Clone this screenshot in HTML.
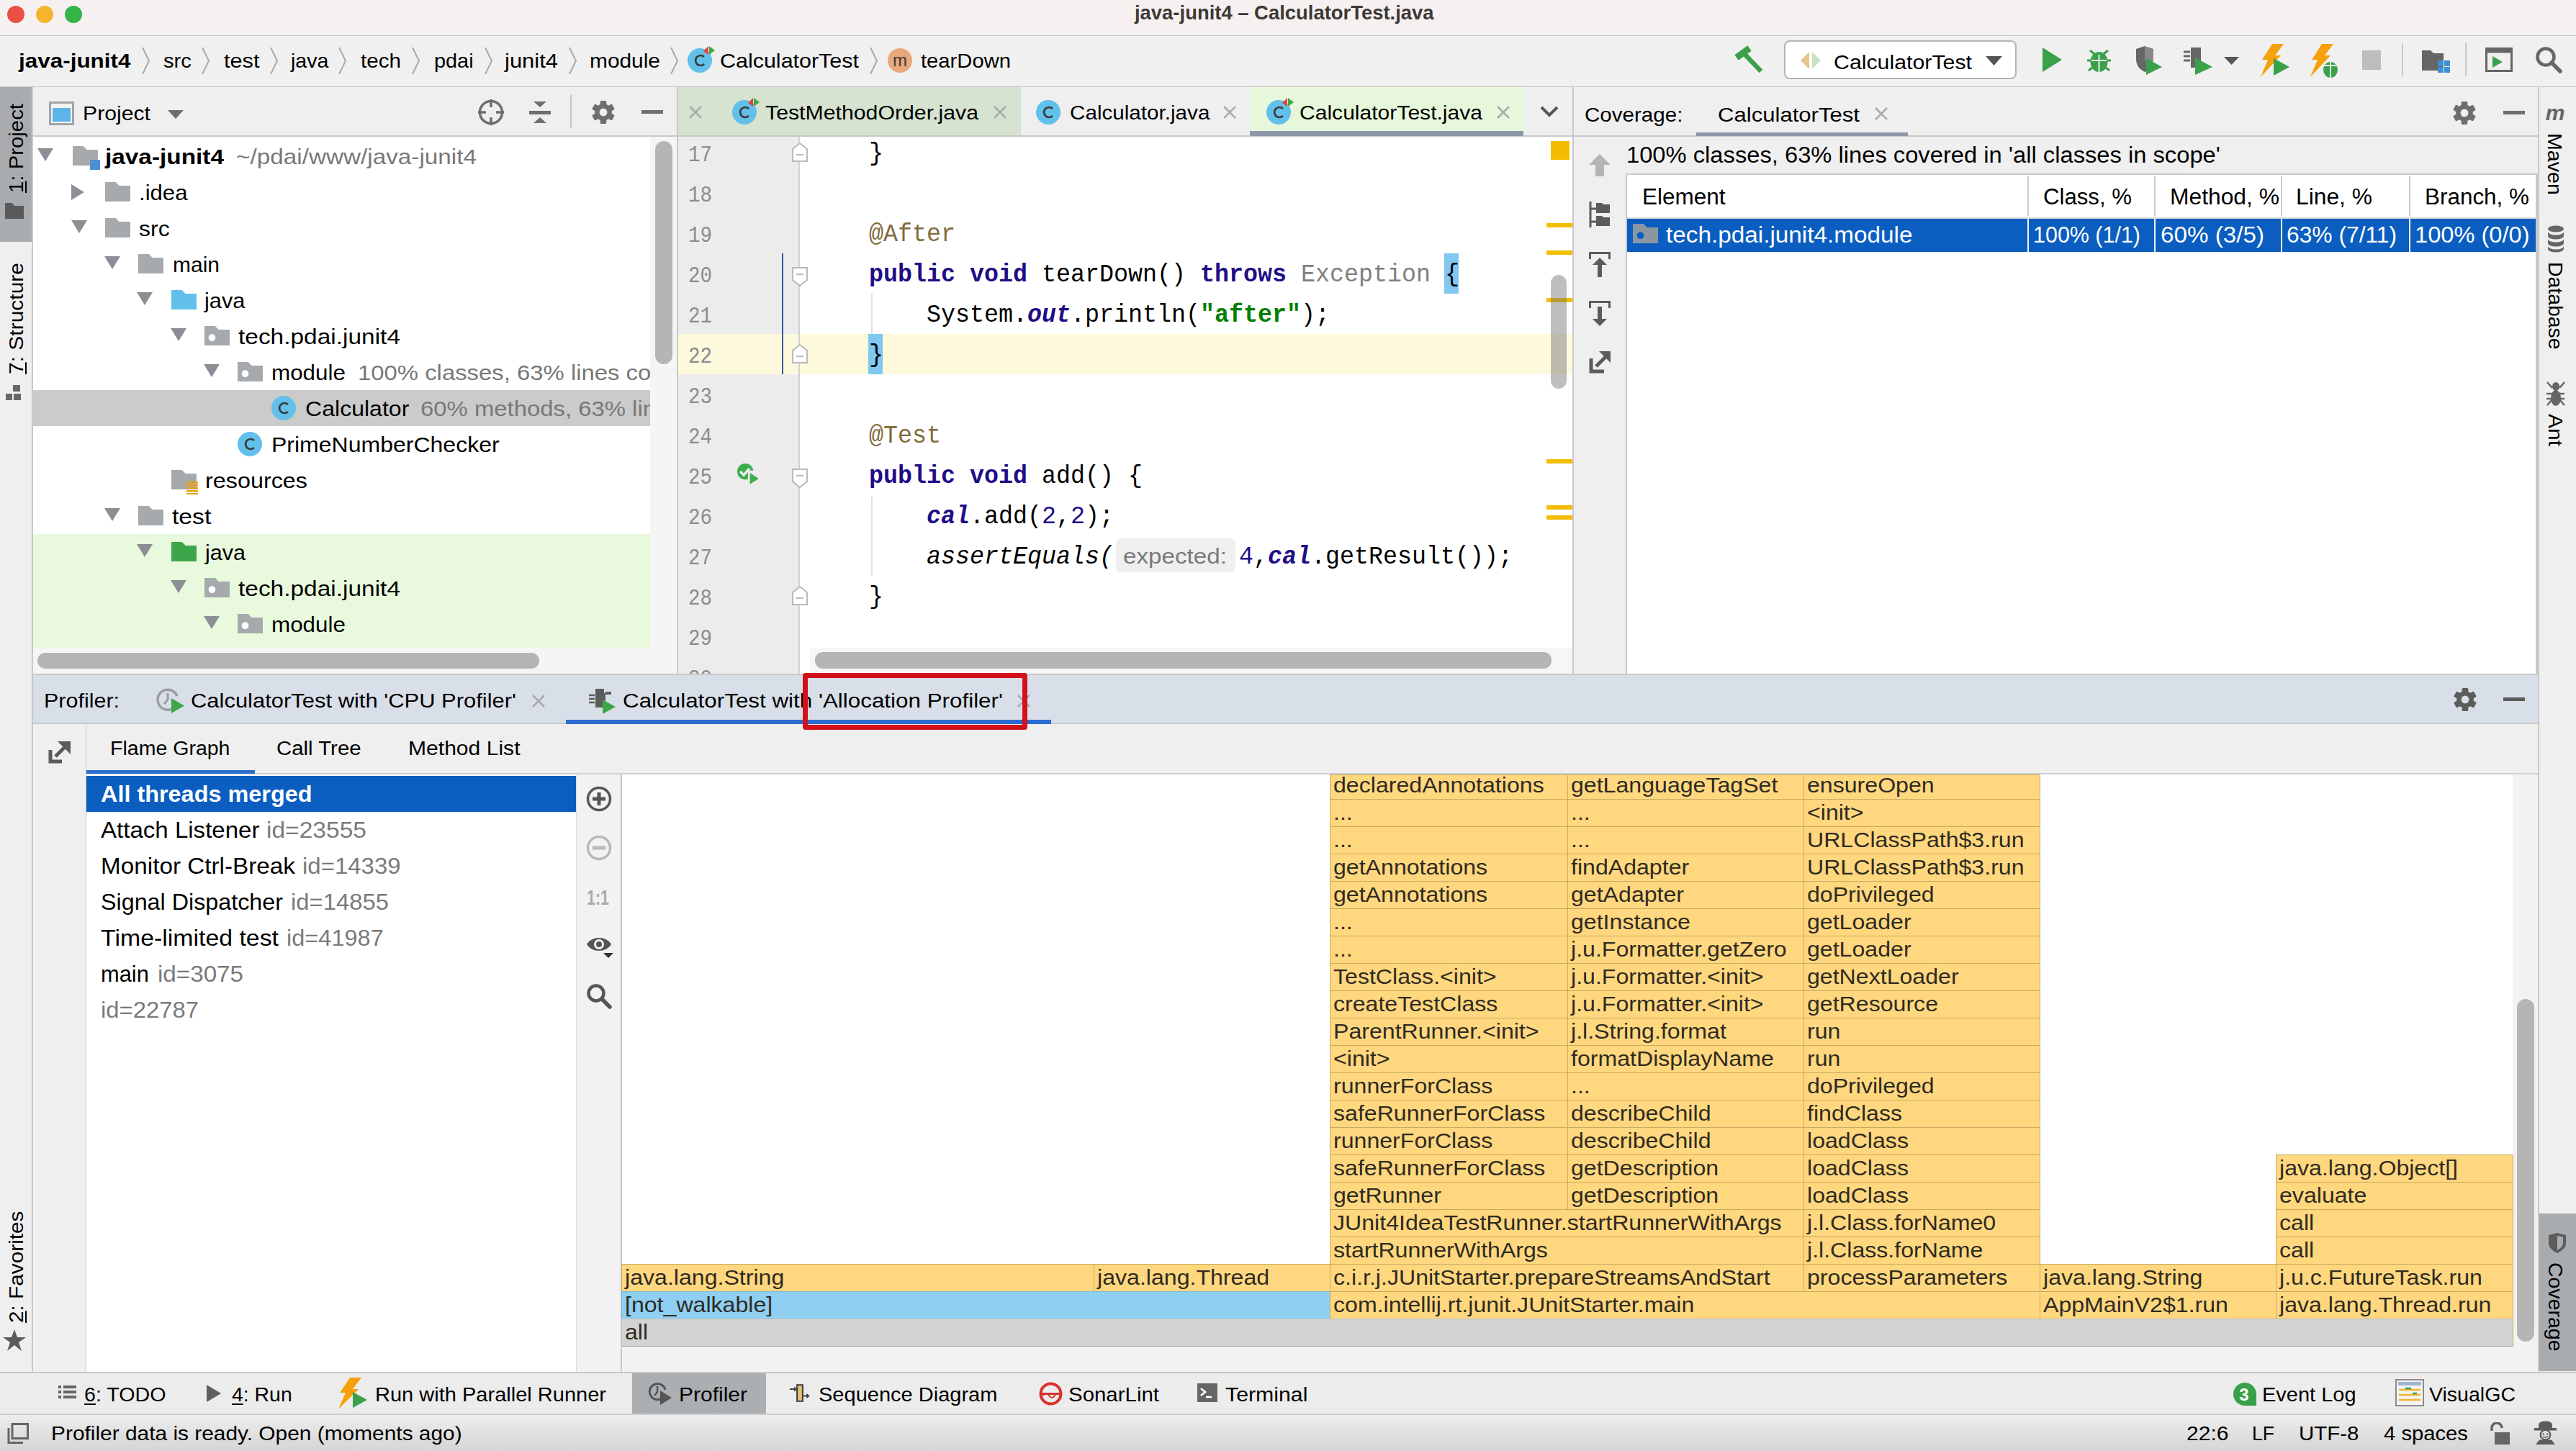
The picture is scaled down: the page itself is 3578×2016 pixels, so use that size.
<!DOCTYPE html>
<html><head><meta charset="utf-8"><style>
html,body{margin:0;padding:0;}
body{width:3578px;height:2016px;overflow:hidden;position:relative;background:#efefef;}
#r{position:absolute;left:0;top:0;width:3578px;height:2016px;overflow:hidden;}
#r>*{position:absolute;}
.t{white-space:pre;transform-origin:0 0;}
u{text-decoration:underline;text-decoration-thickness:2px;text-underline-offset:3px;}
</style></head><body><div id="r">
<div style="left:0px;top:0px;width:3578px;height:49px;background:#f6f0f0;"></div>
<div style="left:0px;top:49px;width:3578px;height:1px;background:#c4c4c4;"></div>
<svg style="left:10px;top:8px;" width="24" height="24" viewBox="0 0 24 24"><circle cx="12" cy="12" r="12" fill="#ea5045"/></svg>
<svg style="left:50px;top:8px;" width="24" height="24" viewBox="0 0 24 24"><circle cx="12" cy="12" r="12" fill="#f4b42c"/></svg>
<svg style="left:90px;top:8px;" width="24" height="24" viewBox="0 0 24 24"><circle cx="12" cy="12" r="12" fill="#33b54a"/></svg>
<div class="t" style="left:1576.0px;top:5.1px;font-family:'Liberation Sans', sans-serif;font-size:27px;line-height:27px;color:#3c3935;font-weight:700;transform:scaleX(1.0157);">java-junit4 – CalculatorTest.java</div>
<div style="left:0px;top:50px;width:3578px;height:70px;background:#f0f0f0;"></div>
<div style="left:0px;top:120px;width:3578px;height:1px;background:#c6c6c6;"></div>
<div class="t" style="left:26.0px;top:70.7px;font-family:'Liberation Sans', sans-serif;font-size:27.5px;line-height:27.5px;color:#000;font-weight:700;transform:scaleX(1.1433);">java-junit4</div>
<svg style="left:197px;top:66px;" width="12" height="37" viewBox="0 0 12 37"><path d="M1 0 L10 18.5 L1 37" fill="none" stroke="#a9a9a9" stroke-width="2"/></svg>
<svg style="left:280px;top:66px;" width="12" height="37" viewBox="0 0 12 37"><path d="M1 0 L10 18.5 L1 37" fill="none" stroke="#a9a9a9" stroke-width="2"/></svg>
<svg style="left:374.5px;top:66px;" width="12" height="37" viewBox="0 0 12 37"><path d="M1 0 L10 18.5 L1 37" fill="none" stroke="#a9a9a9" stroke-width="2"/></svg>
<svg style="left:470px;top:66px;" width="12" height="37" viewBox="0 0 12 37"><path d="M1 0 L10 18.5 L1 37" fill="none" stroke="#a9a9a9" stroke-width="2"/></svg>
<svg style="left:572px;top:66px;" width="12" height="37" viewBox="0 0 12 37"><path d="M1 0 L10 18.5 L1 37" fill="none" stroke="#a9a9a9" stroke-width="2"/></svg>
<svg style="left:672.5px;top:66px;" width="12" height="37" viewBox="0 0 12 37"><path d="M1 0 L10 18.5 L1 37" fill="none" stroke="#a9a9a9" stroke-width="2"/></svg>
<svg style="left:790px;top:66px;" width="12" height="37" viewBox="0 0 12 37"><path d="M1 0 L10 18.5 L1 37" fill="none" stroke="#a9a9a9" stroke-width="2"/></svg>
<svg style="left:931px;top:66px;" width="12" height="37" viewBox="0 0 12 37"><path d="M1 0 L10 18.5 L1 37" fill="none" stroke="#a9a9a9" stroke-width="2"/></svg>
<svg style="left:1208px;top:66px;" width="12" height="37" viewBox="0 0 12 37"><path d="M1 0 L10 18.5 L1 37" fill="none" stroke="#a9a9a9" stroke-width="2"/></svg>
<div class="t" style="left:227.0px;top:70.7px;font-family:'Liberation Sans', sans-serif;font-size:27.5px;line-height:27.5px;color:#000;font-weight:400;transform:scaleX(1.0635);">src</div>
<div class="t" style="left:310.6px;top:70.7px;font-family:'Liberation Sans', sans-serif;font-size:27.5px;line-height:27.5px;color:#000;font-weight:400;transform:scaleX(1.1144);">test</div>
<div class="t" style="left:404.0px;top:70.7px;font-family:'Liberation Sans', sans-serif;font-size:27.5px;line-height:27.5px;color:#000;font-weight:400;transform:scaleX(1.0406);">java</div>
<div class="t" style="left:501.0px;top:70.7px;font-family:'Liberation Sans', sans-serif;font-size:27.5px;line-height:27.5px;color:#000;font-weight:400;transform:scaleX(1.0772);">tech</div>
<div class="t" style="left:603.0px;top:70.7px;font-family:'Liberation Sans', sans-serif;font-size:27.5px;line-height:27.5px;color:#000;font-weight:400;transform:scaleX(1.0500);">pdai</div>
<div class="t" style="left:701.0px;top:70.7px;font-family:'Liberation Sans', sans-serif;font-size:27.5px;line-height:27.5px;color:#000;font-weight:400;transform:scaleX(1.1255);">junit4</div>
<div class="t" style="left:819.0px;top:70.7px;font-family:'Liberation Sans', sans-serif;font-size:27.5px;line-height:27.5px;color:#000;font-weight:400;transform:scaleX(1.0864);">module</div>
<svg style="left:953px;top:59px;" width="60" height="46" viewBox="0 0 60 46"><circle cx="19" cy="25" r="17" fill="#62c0ea"/><path d="M25 20 A7 7 0 1 0 25 30" fill="none" stroke="#3b3b3b" stroke-width="2.7"/><path d="M24 12 L31 5 L31 17 Z" fill="#e3423b"/><path d="M32 5 L40 11 L32 17 Z" fill="#3aaa49"/></svg>
<div class="t" style="left:1000.0px;top:70.7px;font-family:'Liberation Sans', sans-serif;font-size:27.5px;line-height:27.5px;color:#000;font-weight:400;transform:scaleX(1.1076);">CalculatorTest</div>
<svg style="left:1233px;top:67px;" width="34" height="34" viewBox="0 0 34 34"><circle cx="17" cy="17" r="17" fill="#e9a77c"/><text x="17" y="25" font-family="Liberation Sans" font-size="24" text-anchor="middle" fill="#3b3b3b">m</text></svg>
<div class="t" style="left:1279.0px;top:70.7px;font-family:'Liberation Sans', sans-serif;font-size:27.5px;line-height:27.5px;color:#000;font-weight:400;transform:scaleX(1.0620);">tearDown</div>
<svg style="left:2408px;top:62px;" width="42" height="42" viewBox="0 0 42 42"><path d="M4 18 L22 5" stroke="#3aa14a" stroke-width="9"/><path d="M14 12 L38 37" stroke="#3aa14a" stroke-width="6.5"/></svg>
<div style="left:2478px;top:56px;width:323px;height:54px;background:#fff;border:2px solid #b4b4b4;border-radius:8px;box-sizing:border-box;"></div>
<svg style="left:2499px;top:70px;" width="32" height="28" viewBox="0 0 32 28"><path d="M14 2 L2 14 L14 26 Z" fill="#e4c68e"/><path d="M18 2 L30 14 L18 26 Z" fill="#c9e3c2"/></svg>
<div class="t" style="left:2547.0px;top:73.2px;font-family:'Liberation Sans', sans-serif;font-size:27.5px;line-height:27.5px;color:#000;font-weight:400;transform:scaleX(1.1019);">CalculatorTest</div>
<svg style="left:2758px;top:78px;" width="23" height="13" viewBox="0 0 23 13"><path d="M0 0 H23 L11.5 13 Z" fill="#555"/></svg>
<svg style="left:2837px;top:66px;" width="27" height="34" viewBox="0 0 27 34"><path d="M0 0 L27 17 L0 34 Z" fill="#3aa14a"/></svg>
<svg style="left:2899px;top:64px;" width="33" height="38" viewBox="0 0 33 38"><ellipse cx="16.5" cy="22" rx="12" ry="14" fill="#3aa14a"/><path d="M4 6 L10 11 M29 6 L23 11 M0 20 H6 M27 20 H33 M2 34 L7 30 M31 34 L26 30" stroke="#3aa14a" stroke-width="3"/><path d="M6 20 H27 M16.5 12 V36" stroke="#eee" stroke-width="2"/></svg>
<svg style="left:2965px;top:64px;" width="40" height="40" viewBox="0 0 40 40"><path d="M2 4 L14 0 L26 4 V18 C26 28 20 33 14 36 C8 33 2 28 2 18 Z" fill="#666"/><path d="M14 0 L26 4 V18 C26 22 25 25 24 27 L14 20 Z" fill="#eee" opacity="0.25"/><path d="M16 17 L38 29 L16 40 Z" fill="#3aa14a"/></svg>
<svg style="left:3033px;top:64px;" width="42" height="40" viewBox="0 0 42 40"><rect x="10" y="2" width="14" height="28" fill="#666"/><path d="M0 8 H9 M0 14 H9 M0 20 H9" stroke="#666" stroke-width="3"/><path d="M16 16 L40 29 L16 40 Z" fill="#3aa14a"/></svg>
<svg style="left:3089px;top:79px;" width="21" height="11" viewBox="0 0 21 11"><path d="M0 0 H21 L10.5 11 Z" fill="#555"/></svg>
<svg style="left:3134px;top:61px;" width="48" height="46" viewBox="0 0 48 46"><path d="M22 0 H38 L26 16 H34 L6 46 L16 22 H8 Z" fill="#f6a00b"/><path d="M24 20 L46 32 L24 44 Z" fill="#3aa14a"/></svg>
<svg style="left:3203px;top:61px;" width="46" height="48" viewBox="0 0 46 48"><path d="M22 0 H38 L26 16 H34 L6 46 L16 22 H8 Z" fill="#f6a00b"/><ellipse cx="34" cy="36" rx="10" ry="11" fill="#3aa14a"/><path d="M24 30 H44 M34 25 V47" stroke="#eee" stroke-width="2"/></svg>
<div style="left:3281px;top:70px;width:26px;height:27px;background:#bdbdbd;"></div>
<div style="left:3336px;top:60px;width:2px;height:46px;background:#c8c8c8;"></div>
<svg style="left:3364px;top:66px;" width="40" height="36" viewBox="0 0 40 36"><path d="M0 4 H12 L16 8 H30 V32 H0 Z" fill="#666"/><rect x="22" y="18" width="8" height="8" fill="#3d8fd6"/><rect x="31" y="18" width="8" height="8" fill="#3d8fd6"/><rect x="22" y="27" width="8" height="8" fill="#3d8fd6"/><rect x="31" y="27" width="8" height="8" fill="#3d8fd6"/></svg>
<div style="left:3424px;top:60px;width:2px;height:46px;background:#c8c8c8;"></div>
<svg style="left:3452px;top:66px;" width="38" height="34" viewBox="0 0 38 34"><rect x="1.5" y="1.5" width="35" height="31" fill="none" stroke="#666" stroke-width="3"/><rect x="1.5" y="1.5" width="35" height="6" fill="#666"/><path d="M10 12 L24 20 L10 28 Z" fill="#3aa14a"/></svg>
<svg style="left:3521px;top:64px;" width="38" height="38" viewBox="0 0 38 38"><circle cx="15" cy="15" r="11.5" fill="none" stroke="#666" stroke-width="4.5"/><path d="M23 23 L35 35" stroke="#666" stroke-width="5.5" stroke-linecap="round"/></svg>
<div style="left:0px;top:121px;width:44px;height:1786px;background:#efefef;"></div>
<div style="left:44px;top:121px;width:2px;height:1786px;background:#c9c9c9;"></div>
<div style="left:0px;top:121px;width:44px;height:215px;background:#a9acaf;"></div>
<div class="t" style="left:8.7px;top:268.4px;font-family:'Liberation Sans', sans-serif;font-size:27.5px;line-height:27.5px;color:#000;font-weight:400;transform:rotate(-90deg) scaleX(1.0674);"><u>1</u>: Project</div>
<svg style="left:7px;top:282px;" width="26" height="22" viewBox="0 0 26 22"><path d="M0 0 H10 L13 4 H26 V22 H0 Z" fill="#5a5a5a"/></svg>
<div class="t" style="left:8.7px;top:520.0px;font-family:'Liberation Sans', sans-serif;font-size:27.5px;line-height:27.5px;color:#000;font-weight:400;transform:rotate(-90deg) scaleX(1.0903);"><u>7</u>: Structure</div>
<svg style="left:8px;top:535px;" width="26" height="22" viewBox="0 0 26 22"><rect x="10" y="0" width="10" height="9" fill="#666"/><rect x="0" y="12" width="9" height="9" fill="#666"/><rect x="11" y="12" width="10" height="9" fill="#666"/><rect x="14" y="2" width="6" height="6" fill="#666"/></svg>
<div class="t" style="left:8.7px;top:1838.0px;font-family:'Liberation Sans', sans-serif;font-size:27.5px;line-height:27.5px;color:#000;font-weight:400;transform:rotate(-90deg) scaleX(1.0823);"><u>2</u>: Favorites</div>
<svg style="left:4px;top:1847px;" width="32" height="30" viewBox="0 0 32 30"><path d="M16 0 L20 11 L32 11 L22 18 L26 30 L16 22 L6 30 L10 18 L0 11 L12 11 Z" fill="#5c5c5c"/></svg>
<div style="left:3527px;top:121px;width:51px;height:1786px;background:#efefef;"></div>
<div style="left:3525px;top:121px;width:2px;height:1786px;background:#c9c9c9;"></div>
<svg style="left:3536px;top:146px;" width="26" height="24" viewBox="0 0 26 24"><text x="13" y="21" font-family="Liberation Sans" font-weight="700" font-style="italic" font-size="30" text-anchor="middle" fill="#666">m</text></svg>
<div class="t" style="left:3562.3px;top:184.5px;font-family:'Liberation Sans', sans-serif;font-size:27.5px;line-height:27.5px;color:#000;font-weight:400;transform:rotate(90deg) scaleX(1.0418);">Maven</div>
<svg style="left:3538px;top:313px;" width="24" height="38" viewBox="0 0 24 38"><ellipse cx="12" cy="5" rx="11" ry="4.5" fill="#666"/><path d="M1 9 V15 A11 4.5 0 0 0 23 15 V9 A11 4.5 0 0 1 1 9 Z" fill="#666"/><path d="M1 19 V25 A11 4.5 0 0 0 23 25 V19 A11 4.5 0 0 1 1 19 Z" fill="#666"/><path d="M1 29 V33 A11 4.5 0 0 0 23 33 V29 A11 4.5 0 0 1 1 29 Z" fill="#666"/></svg>
<div class="t" style="left:3563.3px;top:364.0px;font-family:'Liberation Sans', sans-serif;font-size:27.5px;line-height:27.5px;color:#000;font-weight:400;transform:rotate(90deg) scaleX(1.0328);">Database</div>
<svg style="left:3537px;top:527px;" width="26" height="40" viewBox="0 0 26 40"><ellipse cx="13" cy="10" rx="5" ry="6" fill="#666"/><ellipse cx="13" cy="26" rx="7" ry="11" fill="#666"/><path d="M1 4 L8 12 M25 4 L18 12 M0 20 H25 M1 36 L8 28 M25 36 L18 28 M0 27 H25" stroke="#666" stroke-width="2.5"/></svg>
<div class="t" style="left:3563.3px;top:575.0px;font-family:'Liberation Sans', sans-serif;font-size:27.5px;line-height:27.5px;color:#000;font-weight:400;transform:rotate(90deg) scaleX(1.0901);">Ant</div>
<div style="left:3527px;top:1686px;width:51px;height:219px;background:#a9acaf;"></div>
<svg style="left:3539px;top:1713px;" width="26" height="28" viewBox="0 0 26 28"><path d="M1 3 L13 0 L25 3 V14 C25 21 19 25 13 28 C7 25 1 21 1 14 Z" fill="#5c5c5c"/><path d="M13 4 L21 6 V14 C21 18 18 21 13 24 Z" fill="#a9acaf"/></svg>
<div class="t" style="left:3563.3px;top:1754.0px;font-family:'Liberation Sans', sans-serif;font-size:27.5px;line-height:27.5px;color:#000;font-weight:400;transform:rotate(90deg) scaleX(1.0356);">Coverage</div>
<div style="left:46px;top:121px;width:894px;height:67px;background:#efefef;"></div>
<div style="left:46px;top:188px;width:894px;height:2px;background:#c9c9c9;"></div>
<div style="left:940px;top:121px;width:2px;height:815px;background:#c9c9c9;"></div>
<svg style="left:68px;top:141px;" width="35" height="33" viewBox="0 0 35 33"><rect x="1.5" y="1.5" width="32" height="30" fill="#f3f3f3" stroke="#a0a4a8" stroke-width="3"/><rect x="5" y="9" width="25" height="19" fill="#5eb4e6"/></svg>
<div class="t" style="left:115.0px;top:144.6px;font-family:'Liberation Sans', sans-serif;font-size:27px;line-height:27px;color:#000;font-weight:400;transform:scaleX(1.1184);">Project</div>
<svg style="left:233px;top:153px;" width="22" height="12" viewBox="0 0 22 12"><path d="M0 0 H22 L11.0 12 Z" fill="#6e6e6e"/></svg>
<svg style="left:664px;top:138px;" width="36" height="36" viewBox="0 0 36 36"><circle cx="18" cy="18" r="15.5" fill="none" stroke="#6e6e6e" stroke-width="3.5"/><path d="M18 0 V11 M18 25 V36 M0 18 H11 M25 18 H36" stroke="#6e6e6e" stroke-width="3.5"/></svg>
<svg style="left:735px;top:140px;" width="30" height="32" viewBox="0 0 30 32"><path d="M6 1 H24 L15 9 Z M6 31 H24 L15 23 Z" fill="#6e6e6e"/><rect x="0" y="14" width="30" height="5" fill="#6e6e6e"/></svg>
<div style="left:792px;top:132px;width:2px;height:46px;background:#c4c4c4;"></div>
<svg style="left:821px;top:139px;" width="34" height="34" viewBox="0 0 34 34"><circle cx="17" cy="17" r="11.84" fill="#6e6e6e"/><rect x="12.70" y="1.00" width="8.6" height="32.00" rx="1.5" fill="#6e6e6e" transform="rotate(0 17 17)"/><rect x="12.70" y="1.00" width="8.6" height="32.00" rx="1.5" fill="#6e6e6e" transform="rotate(60 17 17)"/><rect x="12.70" y="1.00" width="8.6" height="32.00" rx="1.5" fill="#6e6e6e" transform="rotate(120 17 17)"/><circle cx="17" cy="17" r="5.44" fill="#efefef"/></svg>
<div style="left:891px;top:153px;width:30px;height:5px;background:#6e6e6e;"></div>
<div style="left:46px;top:190px;width:857px;height:710px;background:#ffffff;"></div>
<div style="left:903px;top:190px;width:37px;height:746px;background:#f5f5f5;"></div>
<div style="left:910px;top:196px;width:24px;height:310px;background:#b5b5b5;border-radius:12px;"></div>
<div style="left:46px;top:900px;width:857px;height:36px;background:#f5f5f5;"></div>
<div style="left:52px;top:907px;width:697px;height:22px;background:#b5b5b5;border-radius:11px;"></div>
<div style="left:46px;top:542px;width:857px;height:50px;background:#cbcbcb;"></div>
<div style="left:46px;top:742px;width:857px;height:158px;background:#e9f9dd;"></div>
<svg style="left:52px;top:206px;" width="22" height="18" viewBox="0 0 22 18"><path d="M0 0 H22 L11.0 18 Z" fill="#8b8f95"/></svg>
<svg style="left:101px;top:203px;" width="35" height="27" viewBox="0 0 35 27"><path d="M0 0 H14.7 L19.7 5 H35 V27 H0 Z" fill="#a6aaad"/></svg>
<div style="left:125px;top:222px;width:14px;height:14px;background:#4b8fd6;"></div>
<div class="t" style="left:146.0px;top:202.6px;font-family:'Liberation Sans', sans-serif;font-size:30px;line-height:30px;color:#000;font-weight:700;transform:scaleX(1.1120);">java-junit4</div>
<div class="t" style="left:328.0px;top:202.6px;font-family:'Liberation Sans', sans-serif;font-size:30px;line-height:30px;color:#787878;font-weight:400;transform:scaleX(1.1097);">~/pdai/www/java-junit4</div>
<svg style="left:99px;top:256px;" width="18" height="22" viewBox="0 0 18 22"><path d="M0 0 L18 11.0 L0 22 Z" fill="#8b8f95"/></svg>
<svg style="left:146px;top:253px;" width="35" height="27" viewBox="0 0 35 27"><path d="M0 0 H14.7 L19.7 5 H35 V27 H0 Z" fill="#a6aaad"/></svg>
<div class="t" style="left:193.0px;top:252.6px;font-family:'Liberation Sans', sans-serif;font-size:30px;line-height:30px;color:#000;font-weight:400;transform:scaleX(1.0375);">.idea</div>
<svg style="left:99px;top:306px;" width="22" height="18" viewBox="0 0 22 18"><path d="M0 0 H22 L11.0 18 Z" fill="#8b8f95"/></svg>
<svg style="left:146px;top:303px;" width="35" height="27" viewBox="0 0 35 27"><path d="M0 0 H14.7 L19.7 5 H35 V27 H0 Z" fill="#a6aaad"/></svg>
<div class="t" style="left:193.0px;top:302.6px;font-family:'Liberation Sans', sans-serif;font-size:30px;line-height:30px;color:#000;font-weight:400;transform:scaleX(1.0675);">src</div>
<svg style="left:145px;top:356px;" width="22" height="18" viewBox="0 0 22 18"><path d="M0 0 H22 L11.0 18 Z" fill="#8b8f95"/></svg>
<svg style="left:192px;top:353px;" width="35" height="27" viewBox="0 0 35 27"><path d="M0 0 H14.7 L19.7 5 H35 V27 H0 Z" fill="#a6aaad"/></svg>
<div class="t" style="left:240.0px;top:352.6px;font-family:'Liberation Sans', sans-serif;font-size:30px;line-height:30px;color:#000;font-weight:400;">main</div>
<svg style="left:190px;top:406px;" width="22" height="18" viewBox="0 0 22 18"><path d="M0 0 H22 L11.0 18 Z" fill="#8b8f95"/></svg>
<svg style="left:238px;top:403px;" width="35" height="27" viewBox="0 0 35 27"><path d="M0 0 H14.7 L19.7 5 H35 V27 H0 Z" fill="#62c0ea"/></svg>
<div class="t" style="left:284.0px;top:402.6px;font-family:'Liberation Sans', sans-serif;font-size:30px;line-height:30px;color:#000;font-weight:400;transform:scaleX(1.0246);">java</div>
<svg style="left:237px;top:456px;" width="22" height="18" viewBox="0 0 22 18"><path d="M0 0 H22 L11.0 18 Z" fill="#8b8f95"/></svg>
<svg style="left:284px;top:453px;" width="35" height="27" viewBox="0 0 35 27"><path d="M0 0 H14.7 L19.7 5 H35 V27 H0 Z" fill="#a6aaad"/><circle cx="10.5" cy="16.2" r="4.859999999999999" fill="#fff"/></svg>
<div class="t" style="left:331.0px;top:452.6px;font-family:'Liberation Sans', sans-serif;font-size:30px;line-height:30px;color:#000;font-weight:400;transform:scaleX(1.1149);">tech.pdai.junit4</div>
<svg style="left:283px;top:506px;" width="22" height="18" viewBox="0 0 22 18"><path d="M0 0 H22 L11.0 18 Z" fill="#8b8f95"/></svg>
<svg style="left:330px;top:503px;" width="35" height="27" viewBox="0 0 35 27"><path d="M0 0 H14.7 L19.7 5 H35 V27 H0 Z" fill="#a6aaad"/><circle cx="10.5" cy="16.2" r="4.859999999999999" fill="#fff"/></svg>
<div class="t" style="left:377.0px;top:502.6px;font-family:'Liberation Sans', sans-serif;font-size:30px;line-height:30px;color:#000;font-weight:400;transform:scaleX(1.0467);">module</div>
<div style="left:497px;top:492px;width:406px;height:50px;overflow:hidden"></div>
<div class="t" style="left:497.0px;top:502.6px;font-family:'Liberation Sans', sans-serif;font-size:30px;line-height:30px;color:#787878;font-weight:400;transform:scaleX(1.0953);">100% classes, 63% lines covered</div>
<svg style="left:375px;top:542px;" width="60" height="46" viewBox="0 0 60 46"><circle cx="19" cy="25" r="17" fill="#62c0ea"/><path d="M25 20 A7 7 0 1 0 25 30" fill="none" stroke="#3b3b3b" stroke-width="2.7"/></svg>
<div class="t" style="left:423.6px;top:552.6px;font-family:'Liberation Sans', sans-serif;font-size:30px;line-height:30px;color:#000;font-weight:400;transform:scaleX(1.0691);">Calculator</div>
<div class="t" style="left:584.0px;top:552.6px;font-family:'Liberation Sans', sans-serif;font-size:30px;line-height:30px;color:#787878;font-weight:400;transform:scaleX(1.0953);">60% methods, 63% lines covered</div>
<svg style="left:328px;top:592px;" width="60" height="46" viewBox="0 0 60 46"><circle cx="19" cy="25" r="17" fill="#62c0ea"/><path d="M25 20 A7 7 0 1 0 25 30" fill="none" stroke="#3b3b3b" stroke-width="2.7"/></svg>
<div class="t" style="left:377.0px;top:602.6px;font-family:'Liberation Sans', sans-serif;font-size:30px;line-height:30px;color:#000;font-weight:400;transform:scaleX(1.0669);">PrimeNumberChecker</div>
<svg style="left:238px;top:653px;" width="35" height="27" viewBox="0 0 35 27"><path d="M0 0 H14.7 L19.7 5 H35 V27 H0 Z" fill="#a6aaad"/></svg>
<svg style="left:259px;top:669px;" width="16" height="18" viewBox="0 0 16 18"><rect x="0" y="0" width="16" height="2.5" fill="#e8a01b"/><rect x="0" y="4" width="16" height="2.5" fill="#e8a01b"/><rect x="0" y="8" width="16" height="2.5" fill="#e8a01b"/><rect x="0" y="12" width="16" height="2.5" fill="#e8a01b"/><rect x="0" y="16" width="16" height="2.5" fill="#e8a01b"/></svg>
<div class="t" style="left:285.0px;top:652.6px;font-family:'Liberation Sans', sans-serif;font-size:30px;line-height:30px;color:#000;font-weight:400;transform:scaleX(1.0781);">resources</div>
<svg style="left:145px;top:706px;" width="22" height="18" viewBox="0 0 22 18"><path d="M0 0 H22 L11.0 18 Z" fill="#8b8f95"/></svg>
<svg style="left:192px;top:703px;" width="35" height="27" viewBox="0 0 35 27"><path d="M0 0 H14.7 L19.7 5 H35 V27 H0 Z" fill="#a6aaad"/></svg>
<div class="t" style="left:238.7px;top:702.6px;font-family:'Liberation Sans', sans-serif;font-size:30px;line-height:30px;color:#000;font-weight:400;transform:scaleX(1.1228);">test</div>
<svg style="left:190px;top:756px;" width="22" height="18" viewBox="0 0 22 18"><path d="M0 0 H22 L11.0 18 Z" fill="#8b8f95"/></svg>
<svg style="left:238px;top:753px;" width="35" height="27" viewBox="0 0 35 27"><path d="M0 0 H14.7 L19.7 5 H35 V27 H0 Z" fill="#3ea64a"/></svg>
<div class="t" style="left:285.0px;top:752.6px;font-family:'Liberation Sans', sans-serif;font-size:30px;line-height:30px;color:#000;font-weight:400;transform:scaleX(1.0173);">java</div>
<svg style="left:237px;top:806px;" width="22" height="18" viewBox="0 0 22 18"><path d="M0 0 H22 L11.0 18 Z" fill="#8b8f95"/></svg>
<svg style="left:284px;top:803px;" width="35" height="27" viewBox="0 0 35 27"><path d="M0 0 H14.7 L19.7 5 H35 V27 H0 Z" fill="#a6aaad"/><circle cx="10.5" cy="16.2" r="4.859999999999999" fill="#fff"/></svg>
<div class="t" style="left:331.0px;top:802.6px;font-family:'Liberation Sans', sans-serif;font-size:30px;line-height:30px;color:#000;font-weight:400;transform:scaleX(1.1149);">tech.pdai.junit4</div>
<svg style="left:283px;top:856px;" width="22" height="18" viewBox="0 0 22 18"><path d="M0 0 H22 L11.0 18 Z" fill="#8b8f95"/></svg>
<svg style="left:330px;top:853px;" width="35" height="27" viewBox="0 0 35 27"><path d="M0 0 H14.7 L19.7 5 H35 V27 H0 Z" fill="#a6aaad"/><circle cx="10.5" cy="16.2" r="4.859999999999999" fill="#fff"/></svg>
<div class="t" style="left:377.0px;top:852.6px;font-family:'Liberation Sans', sans-serif;font-size:30px;line-height:30px;color:#000;font-weight:400;transform:scaleX(1.0467);">module</div>
<div style="left:903px;top:190px;width:37px;height:710px;background:#f5f5f5;"></div>
<div style="left:910px;top:196px;width:24px;height:310px;background:#b5b5b5;border-radius:12px;"></div>
<div style="left:46px;top:900px;width:857px;height:36px;background:#f5f5f5;"></div>
<div style="left:52px;top:907px;width:697px;height:22px;background:#b5b5b5;border-radius:11px;"></div>
<div style="left:940px;top:121px;width:2px;height:815px;background:#c9c9c9;"></div>
<div style="left:942px;top:121px;width:1242px;height:67px;background:#efefef;"></div>
<div style="left:942px;top:188px;width:1242px;height:2px;background:#c9c9c9;"></div>
<div style="left:942px;top:121px;width:476px;height:67px;background:#d5e3d0;"></div>
<div style="left:1736px;top:121px;width:380px;height:67px;background:#e7f7db;"></div>
<div style="left:1736px;top:182px;width:380px;height:7px;background:#8c98a7;"></div>
<svg style="left:957px;top:147px;" width="18" height="18" viewBox="0 0 18 18"><path d="M1 1 L17 17 M17 1 L1 17" stroke="#a9abad" stroke-width="2.5"/></svg>
<svg style="left:1014.5px;top:131px;" width="60" height="46" viewBox="0 0 60 46"><circle cx="19" cy="25" r="17" fill="#62c0ea"/><path d="M25 20 A7 7 0 1 0 25 30" fill="none" stroke="#3b3b3b" stroke-width="2.7"/><path d="M24 12 L31 5 L31 17 Z" fill="#e3423b"/><path d="M32 5 L40 11 L32 17 Z" fill="#3aaa49"/></svg>
<div class="t" style="left:1063.0px;top:144.1px;font-family:'Liberation Sans', sans-serif;font-size:27px;line-height:27px;color:#000;font-weight:400;transform:scaleX(1.1206);">TestMethodOrder.java</div>
<svg style="left:1380px;top:147px;" width="18" height="18" viewBox="0 0 18 18"><path d="M1 1 L17 17 M17 1 L1 17" stroke="#a9abad" stroke-width="2.5"/></svg>
<svg style="left:1437px;top:131px;" width="60" height="46" viewBox="0 0 60 46"><circle cx="19" cy="25" r="17" fill="#62c0ea"/><path d="M25 20 A7 7 0 1 0 25 30" fill="none" stroke="#3b3b3b" stroke-width="2.7"/></svg>
<div class="t" style="left:1485.6px;top:144.1px;font-family:'Liberation Sans', sans-serif;font-size:27px;line-height:27px;color:#000;font-weight:400;transform:scaleX(1.0976);">Calculator.java</div>
<svg style="left:1699px;top:147px;" width="18" height="18" viewBox="0 0 18 18"><path d="M1 1 L17 17 M17 1 L1 17" stroke="#a9abad" stroke-width="2.5"/></svg>
<svg style="left:1757px;top:131px;" width="60" height="46" viewBox="0 0 60 46"><circle cx="19" cy="25" r="17" fill="#62c0ea"/><path d="M25 20 A7 7 0 1 0 25 30" fill="none" stroke="#3b3b3b" stroke-width="2.7"/><path d="M24 12 L31 5 L31 17 Z" fill="#e3423b"/><path d="M32 5 L40 11 L32 17 Z" fill="#3aaa49"/></svg>
<div class="t" style="left:1805.0px;top:144.1px;font-family:'Liberation Sans', sans-serif;font-size:27px;line-height:27px;color:#000;font-weight:400;transform:scaleX(1.1135);">CalculatorTest.java</div>
<svg style="left:2079px;top:147px;" width="18" height="18" viewBox="0 0 18 18"><path d="M1 1 L17 17 M17 1 L1 17" stroke="#a9abad" stroke-width="2.5"/></svg>
<svg style="left:2139px;top:146px;" width="26" height="18" viewBox="0 0 26 18"><path d="M2 3 L13 14 L24 3" fill="none" stroke="#555" stroke-width="4"/></svg>
<div style="left:2184px;top:121px;width:2px;height:815px;background:#c9c9c9;"></div>
<div style="left:942px;top:190px;width:1242px;height:746px;background:#ffffff;"></div>
<div style="left:942px;top:190px;width:168px;height:746px;background:#ececec;"></div>
<div style="left:942px;top:464px;width:1242px;height:56px;background:#fdf9dc;"></div>
<div style="left:1109px;top:190px;width:2px;height:746px;background:#d2d2d2;"></div>
<div style="left:1086px;top:352px;width:2px;height:168px;background:#3a5a99;"></div>
<div class="t" style="left:955.5px;top:199.5px;font-family:'Liberation Mono', monospace;font-size:32px;line-height:32px;color:#8c8c8c;font-weight:400;transform:scaleX(0.8592);">17</div>
<div class="t" style="left:955.5px;top:255.5px;font-family:'Liberation Mono', monospace;font-size:32px;line-height:32px;color:#8c8c8c;font-weight:400;transform:scaleX(0.8592);">18</div>
<div class="t" style="left:955.5px;top:311.5px;font-family:'Liberation Mono', monospace;font-size:32px;line-height:32px;color:#8c8c8c;font-weight:400;transform:scaleX(0.8592);">19</div>
<div class="t" style="left:955.5px;top:367.5px;font-family:'Liberation Mono', monospace;font-size:32px;line-height:32px;color:#8c8c8c;font-weight:400;transform:scaleX(0.8592);">20</div>
<div class="t" style="left:955.5px;top:423.5px;font-family:'Liberation Mono', monospace;font-size:32px;line-height:32px;color:#8c8c8c;font-weight:400;transform:scaleX(0.8592);">21</div>
<div class="t" style="left:955.5px;top:479.5px;font-family:'Liberation Mono', monospace;font-size:32px;line-height:32px;color:#8c8c8c;font-weight:400;transform:scaleX(0.8592);">22</div>
<div class="t" style="left:955.5px;top:535.5px;font-family:'Liberation Mono', monospace;font-size:32px;line-height:32px;color:#8c8c8c;font-weight:400;transform:scaleX(0.8592);">23</div>
<div class="t" style="left:955.5px;top:591.5px;font-family:'Liberation Mono', monospace;font-size:32px;line-height:32px;color:#8c8c8c;font-weight:400;transform:scaleX(0.8592);">24</div>
<div class="t" style="left:955.5px;top:647.5px;font-family:'Liberation Mono', monospace;font-size:32px;line-height:32px;color:#8c8c8c;font-weight:400;transform:scaleX(0.8592);">25</div>
<div class="t" style="left:955.5px;top:703.5px;font-family:'Liberation Mono', monospace;font-size:32px;line-height:32px;color:#8c8c8c;font-weight:400;transform:scaleX(0.8592);">26</div>
<div class="t" style="left:955.5px;top:759.5px;font-family:'Liberation Mono', monospace;font-size:32px;line-height:32px;color:#8c8c8c;font-weight:400;transform:scaleX(0.8592);">27</div>
<div class="t" style="left:955.5px;top:815.5px;font-family:'Liberation Mono', monospace;font-size:32px;line-height:32px;color:#8c8c8c;font-weight:400;transform:scaleX(0.8592);">28</div>
<div class="t" style="left:955.5px;top:871.5px;font-family:'Liberation Mono', monospace;font-size:32px;line-height:32px;color:#8c8c8c;font-weight:400;transform:scaleX(0.8592);">29</div>
<div class="t" style="left:955.5px;top:927.5px;font-family:'Liberation Mono', monospace;font-size:32px;line-height:32px;color:#8c8c8c;font-weight:400;transform:scaleX(0.8592);">30</div>
<svg style="left:1099.5px;top:198px;" width="22" height="27" viewBox="0 0 22 27"><path d="M11 1 L21 9 V26 H1 V9 Z" fill="#fff" stroke="#b9b9b9" stroke-width="2"/><path d="M6 17 H16" stroke="#b9b9b9" stroke-width="2"/></svg>
<svg style="left:1099.5px;top:371px;" width="22" height="27" viewBox="0 0 22 27"><path d="M1 1 H21 V18 L11 26 L1 18 Z" fill="#fff" stroke="#b9b9b9" stroke-width="2"/><path d="M6 10 H16" stroke="#b9b9b9" stroke-width="2"/></svg>
<svg style="left:1099.5px;top:478px;" width="22" height="27" viewBox="0 0 22 27"><path d="M11 1 L21 9 V26 H1 V9 Z" fill="#fff" stroke="#b9b9b9" stroke-width="2"/><path d="M6 17 H16" stroke="#b9b9b9" stroke-width="2"/></svg>
<svg style="left:1099.5px;top:651px;" width="22" height="27" viewBox="0 0 22 27"><path d="M1 1 H21 V18 L11 26 L1 18 Z" fill="#fff" stroke="#b9b9b9" stroke-width="2"/><path d="M6 10 H16" stroke="#b9b9b9" stroke-width="2"/></svg>
<svg style="left:1099.5px;top:814px;" width="22" height="27" viewBox="0 0 22 27"><path d="M11 1 L21 9 V26 H1 V9 Z" fill="#fff" stroke="#b9b9b9" stroke-width="2"/><path d="M6 17 H16" stroke="#b9b9b9" stroke-width="2"/></svg>
<svg style="left:1022px;top:642px;" width="34" height="34" viewBox="0 0 34 34"><circle cx="13.2" cy="13.2" r="11.2" fill="#3cae4d"/><rect x="16.9" y="11.7" width="10" height="16" fill="#ececec"/><path d="M6 13 L11 18 L19 9" fill="none" stroke="#ececec" stroke-width="3.5"/><path d="M19.7 15 L31.8 23 L19.7 30.8 Z" fill="#3cae4d"/></svg>
<div style="left:2006px;top:352px;width:20px;height:56px;background:#80c8f0;"></div>
<div style="left:1206px;top:464px;width:20px;height:56px;background:#80c8f0;"></div>
<div style="left:1210px;top:408px;width:2px;height:56px;background:#e2e2e2;"></div>
<div style="left:1210px;top:689px;width:2px;height:111px;background:#e2e2e2;"></div>
<div class="t" style="left:1127.0px;top:197.2px;font-family:'Liberation Mono', monospace;font-size:35.0px;line-height:35.0px;color:#000;font-weight:400;transform:scaleX(0.9522);">    }</div>
<div class="t" style="left:1127.0px;top:309.2px;font-family:'Liberation Mono', monospace;font-size:35.0px;line-height:35.0px;color:#7f6c3c;font-weight:400;transform:scaleX(0.9522);">    @After</div>
<div class="t" style="left:1207.0px;top:365.2px;font-family:'Liberation Mono', monospace;font-size:35.0px;line-height:35.0px;color:#1f0e86;font-weight:700;transform:scaleX(0.9522);">public</div>
<div class="t" style="left:1347.0px;top:365.2px;font-family:'Liberation Mono', monospace;font-size:35.0px;line-height:35.0px;color:#1f0e86;font-weight:700;transform:scaleX(0.9522);">void</div>
<div class="t" style="left:1427.0px;top:365.2px;font-family:'Liberation Mono', monospace;font-size:35.0px;line-height:35.0px;color:#000;font-weight:400;transform:scaleX(0.9522);"> tearDown() </div>
<div class="t" style="left:1667.0px;top:365.2px;font-family:'Liberation Mono', monospace;font-size:35.0px;line-height:35.0px;color:#1f0e86;font-weight:700;transform:scaleX(0.9522);">throws</div>
<div class="t" style="left:1807.0px;top:365.2px;font-family:'Liberation Mono', monospace;font-size:35.0px;line-height:35.0px;color:#808080;font-weight:400;transform:scaleX(0.9522);">Exception</div>
<div class="t" style="left:1987.0px;top:365.2px;font-family:'Liberation Mono', monospace;font-size:35.0px;line-height:35.0px;color:#000;font-weight:400;transform:scaleX(0.9522);"> {</div>
<div class="t" style="left:1127.0px;top:421.2px;font-family:'Liberation Mono', monospace;font-size:35.0px;line-height:35.0px;color:#000;font-weight:400;transform:scaleX(0.9522);">        System.</div>
<div class="t" style="left:1427.0px;top:421.2px;font-family:'Liberation Mono', monospace;font-size:35.0px;line-height:35.0px;color:#1f0e86;font-weight:700;font-style:italic;transform:scaleX(0.9522);">out</div>
<div class="t" style="left:1487.0px;top:421.2px;font-family:'Liberation Mono', monospace;font-size:35.0px;line-height:35.0px;color:#000;font-weight:400;transform:scaleX(0.9522);">.println(</div>
<div class="t" style="left:1667.0px;top:421.2px;font-family:'Liberation Mono', monospace;font-size:35.0px;line-height:35.0px;color:#008000;font-weight:700;transform:scaleX(0.9522);">&quot;after&quot;</div>
<div class="t" style="left:1807.0px;top:421.2px;font-family:'Liberation Mono', monospace;font-size:35.0px;line-height:35.0px;color:#000;font-weight:400;transform:scaleX(0.9522);">);</div>
<div class="t" style="left:1127.0px;top:477.2px;font-family:'Liberation Mono', monospace;font-size:35.0px;line-height:35.0px;color:#000;font-weight:400;transform:scaleX(0.9522);">    }</div>
<div class="t" style="left:1127.0px;top:589.2px;font-family:'Liberation Mono', monospace;font-size:35.0px;line-height:35.0px;color:#7f6c3c;font-weight:400;transform:scaleX(0.9522);">    @Test</div>
<div class="t" style="left:1207.0px;top:645.2px;font-family:'Liberation Mono', monospace;font-size:35.0px;line-height:35.0px;color:#1f0e86;font-weight:700;transform:scaleX(0.9522);">public</div>
<div class="t" style="left:1347.0px;top:645.2px;font-family:'Liberation Mono', monospace;font-size:35.0px;line-height:35.0px;color:#1f0e86;font-weight:700;transform:scaleX(0.9522);">void</div>
<div class="t" style="left:1427.0px;top:645.2px;font-family:'Liberation Mono', monospace;font-size:35.0px;line-height:35.0px;color:#000;font-weight:400;transform:scaleX(0.9522);"> add() {</div>
<div class="t" style="left:1287.0px;top:701.2px;font-family:'Liberation Mono', monospace;font-size:35.0px;line-height:35.0px;color:#1f0e86;font-weight:700;font-style:italic;transform:scaleX(0.9522);">cal</div>
<div class="t" style="left:1347.0px;top:701.2px;font-family:'Liberation Mono', monospace;font-size:35.0px;line-height:35.0px;color:#000;font-weight:400;transform:scaleX(0.9522);">.add(</div>
<div class="t" style="left:1447.0px;top:701.2px;font-family:'Liberation Mono', monospace;font-size:35.0px;line-height:35.0px;color:#1f0e8a;font-weight:400;transform:scaleX(0.9522);">2</div>
<div class="t" style="left:1467.0px;top:701.2px;font-family:'Liberation Mono', monospace;font-size:35.0px;line-height:35.0px;color:#000;font-weight:400;transform:scaleX(0.9522);">,</div>
<div class="t" style="left:1487.0px;top:701.2px;font-family:'Liberation Mono', monospace;font-size:35.0px;line-height:35.0px;color:#1f0e8a;font-weight:400;transform:scaleX(0.9522);">2</div>
<div class="t" style="left:1507.0px;top:701.2px;font-family:'Liberation Mono', monospace;font-size:35.0px;line-height:35.0px;color:#000;font-weight:400;transform:scaleX(0.9522);">);</div>
<div class="t" style="left:1287.0px;top:757.2px;font-family:'Liberation Mono', monospace;font-size:35.0px;line-height:35.0px;color:#000;font-weight:400;font-style:italic;transform:scaleX(0.9522);">assertEquals(</div>
<div style="left:1550px;top:748px;width:166px;height:47px;background:#efefef;border-radius:7px;"></div>
<div class="t" style="left:1560.0px;top:758.5px;font-family:'Liberation Sans', sans-serif;font-size:29px;line-height:29px;color:#7a7a7a;font-weight:400;transform:scaleX(1.1450);">expected:</div>
<div class="t" style="left:1720.5px;top:757.2px;font-family:'Liberation Mono', monospace;font-size:35.0px;line-height:35.0px;color:#1f0e8a;font-weight:400;transform:scaleX(0.9522);">4</div>
<div class="t" style="left:1740.5px;top:757.2px;font-family:'Liberation Mono', monospace;font-size:35.0px;line-height:35.0px;color:#000;font-weight:400;transform:scaleX(0.9522);">,</div>
<div class="t" style="left:1760.5px;top:757.2px;font-family:'Liberation Mono', monospace;font-size:35.0px;line-height:35.0px;color:#1f0e86;font-weight:700;font-style:italic;transform:scaleX(0.9522);">cal</div>
<div class="t" style="left:1820.5px;top:757.2px;font-family:'Liberation Mono', monospace;font-size:35.0px;line-height:35.0px;color:#000;font-weight:400;transform:scaleX(0.9522);">.getResult());</div>
<div class="t" style="left:1127.0px;top:813.2px;font-family:'Liberation Mono', monospace;font-size:35.0px;line-height:35.0px;color:#000;font-weight:400;transform:scaleX(0.9522);">    }</div>
<div style="left:2154px;top:196px;width:26px;height:26px;background:#f2bd00;"></div>
<div style="left:2148px;top:310px;width:36px;height:6px;background:#f2bd00;"></div>
<div style="left:2148px;top:348px;width:36px;height:6px;background:#f2bd00;"></div>
<div style="left:2148px;top:414px;width:36px;height:6px;background:#f2bd00;"></div>
<div style="left:2148px;top:638px;width:36px;height:6px;background:#f2bd00;"></div>
<div style="left:2148px;top:702px;width:36px;height:6px;background:#f2bd00;"></div>
<div style="left:2148px;top:716px;width:36px;height:6px;background:#f2bd00;"></div>
<div style="left:2154px;top:382px;width:22px;height:158px;background:rgba(110,110,110,0.45);border-radius:11px;"></div>
<div style="left:1125px;top:900px;width:1059px;height:36px;background:#f6f6f6;"></div>
<div style="left:1132px;top:906px;width:1023px;height:23px;background:#b5b5b5;border-radius:11px;"></div>
<div style="left:2186px;top:121px;width:1339px;height:67px;background:#efefef;"></div>
<div style="left:2186px;top:188px;width:1339px;height:2px;background:#c9c9c9;"></div>
<div class="t" style="left:2200.6px;top:146.6px;font-family:'Liberation Sans', sans-serif;font-size:27px;line-height:27px;color:#000;font-weight:400;transform:scaleX(1.0949);">Coverage:</div>
<div class="t" style="left:2386.0px;top:146.6px;font-family:'Liberation Sans', sans-serif;font-size:27px;line-height:27px;color:#000;font-weight:400;transform:scaleX(1.1515);">CalculatorTest</div>
<svg style="left:2604px;top:149px;" width="18" height="18" viewBox="0 0 18 18"><path d="M1 1 L17 17 M17 1 L1 17" stroke="#a9abad" stroke-width="2.5"/></svg>
<div style="left:2356px;top:184px;width:294px;height:5px;background:#8c98a7;"></div>
<svg style="left:3406px;top:140px;" width="34" height="34" viewBox="0 0 34 34"><circle cx="17" cy="17" r="11.84" fill="#6e6e6e"/><rect x="12.70" y="1.00" width="8.6" height="32.00" rx="1.5" fill="#6e6e6e" transform="rotate(0 17 17)"/><rect x="12.70" y="1.00" width="8.6" height="32.00" rx="1.5" fill="#6e6e6e" transform="rotate(60 17 17)"/><rect x="12.70" y="1.00" width="8.6" height="32.00" rx="1.5" fill="#6e6e6e" transform="rotate(120 17 17)"/><circle cx="17" cy="17" r="5.44" fill="#efefef"/></svg>
<div style="left:3477px;top:154px;width:30px;height:5px;background:#6e6e6e;"></div>
<div style="left:2186px;top:190px;width:1339px;height:746px;background:#efefef;"></div>
<svg style="left:2207px;top:214px;" width="30" height="31" viewBox="0 0 30 31"><path d="M15 0 L30 15 H21 V31 H9 V15 H0 Z" fill="#b4b4b4"/></svg>
<svg style="left:2207px;top:280px;" width="30" height="36" viewBox="0 0 30 36"><path d="M2 0 V36" stroke="#5b5b5b" stroke-width="3"/><path d="M2 10 H10 M2 28 H10" stroke="#5b5b5b" stroke-width="3"/><path d="M10 2 H18 L20 4 H29 V16 H10 Z M10 20 H18 L20 22 H29 V34 H10 Z" fill="#5b5b5b"/></svg>
<svg style="left:2207px;top:350px;" width="30" height="35" viewBox="0 0 30 35"><path d="M1.5 10 V1.5 H28.5 V10" fill="none" stroke="#5b5b5b" stroke-width="3"/><path d="M15 8 L25 18 H18 V35 H12 V18 H5 Z" fill="#5b5b5b"/></svg>
<svg style="left:2207px;top:418px;" width="30" height="35" viewBox="0 0 30 35"><path d="M1.5 10 V1.5 H28.5 V10" fill="none" stroke="#5b5b5b" stroke-width="3"/><path d="M15 35 L25 25 H18 V8 H12 V25 H5 Z" fill="#5b5b5b"/></svg>
<svg style="left:2207px;top:486px;" width="30" height="33" viewBox="0 0 30 33"><path d="M3 12 V30 H21" fill="none" stroke="#5b5b5b" stroke-width="5"/><path d="M10 23 L24 9" stroke="#5b5b5b" stroke-width="5"/><path d="M14 2 H30 V18 Z" fill="#5b5b5b"/></svg>
<div class="t" style="left:2258.6px;top:199.8px;font-family:'Liberation Sans', sans-serif;font-size:31px;line-height:31px;color:#000;font-weight:400;transform:scaleX(1.0549);">100% classes, 63% lines covered in &#x27;all classes in scope&#x27;</div>
<div style="left:2258px;top:241px;width:1268px;height:695px;background:#ffffff;border-left:2px solid #c9c9c9;border-top:2px solid #c9c9c9;box-sizing:border-box;"></div>
<div style="left:2816px;top:244px;width:2px;height:56px;background:#cdcdcd;"></div>
<div style="left:2992px;top:244px;width:2px;height:56px;background:#cdcdcd;"></div>
<div style="left:3168px;top:244px;width:2px;height:56px;background:#cdcdcd;"></div>
<div style="left:3346px;top:244px;width:2px;height:56px;background:#cdcdcd;"></div>
<div class="t" style="left:2281.0px;top:257.8px;font-family:'Liberation Sans', sans-serif;font-size:31px;line-height:31px;color:#000;font-weight:400;transform:scaleX(1.0164);">Element</div>
<div class="t" style="left:2838.0px;top:257.8px;font-family:'Liberation Sans', sans-serif;font-size:31px;line-height:31px;color:#000;font-weight:400;transform:scaleX(1.0056);">Class, %</div>
<div class="t" style="left:3014.0px;top:257.8px;font-family:'Liberation Sans', sans-serif;font-size:31px;line-height:31px;color:#000;font-weight:400;transform:scaleX(1.0256);">Method, %</div>
<div class="t" style="left:3189.4px;top:257.8px;font-family:'Liberation Sans', sans-serif;font-size:31px;line-height:31px;color:#000;font-weight:400;transform:scaleX(1.0251);">Line, %</div>
<div class="t" style="left:3368.0px;top:257.8px;font-family:'Liberation Sans', sans-serif;font-size:31px;line-height:31px;color:#000;font-weight:400;transform:scaleX(1.0139);">Branch, %</div>
<div style="left:2260px;top:304px;width:1262px;height:46px;background:#0b5ec0;"></div>
<div style="left:2260px;top:302px;width:1262px;height:2px;background:#d8d8d8;"></div>
<div style="left:2816px;top:304px;width:2px;height:46px;background:#f4f4f4;"></div>
<div style="left:2992px;top:304px;width:2px;height:46px;background:#f4f4f4;"></div>
<div style="left:3168px;top:304px;width:2px;height:46px;background:#f4f4f4;"></div>
<div style="left:3346px;top:304px;width:2px;height:46px;background:#f4f4f4;"></div>
<svg style="left:2268px;top:311px;" width="35" height="27" viewBox="0 0 35 27"><path d="M0 0 H14.7 L19.7 5 H35 V27 H0 Z" fill="#8b96a3"/><circle cx="10.5" cy="16.2" r="4.859999999999999" fill="#0b5ec0"/></svg>
<div class="t" style="left:2314.0px;top:311.4px;font-family:'Liberation Sans', sans-serif;font-size:31px;line-height:31px;color:#fff;font-weight:400;transform:scaleX(1.0742);">tech.pdai.junit4.module</div>
<div class="t" style="left:2824.0px;top:311.4px;font-family:'Liberation Sans', sans-serif;font-size:31px;line-height:31px;color:#fff;font-weight:400;transform:scaleX(0.9826);">100% (1/1)</div>
<div class="t" style="left:3000.5px;top:311.4px;font-family:'Liberation Sans', sans-serif;font-size:31px;line-height:31px;color:#fff;font-weight:400;transform:scaleX(1.0714);">60% (3/5)</div>
<div class="t" style="left:3176.0px;top:311.4px;font-family:'Liberation Sans', sans-serif;font-size:31px;line-height:31px;color:#fff;font-weight:400;transform:scaleX(1.0245);">63% (7/11)</div>
<div class="t" style="left:3354.0px;top:311.4px;font-family:'Liberation Sans', sans-serif;font-size:31px;line-height:31px;color:#fff;font-weight:400;transform:scaleX(1.0518);">100% (0/0)</div>
<div style="left:3522px;top:241px;width:4px;height:695px;background:#c9c9c9;"></div>
<div style="left:46px;top:936px;width:3479px;height:2px;background:#c9c9c9;"></div>
<div style="left:46px;top:938px;width:3479px;height:66px;background:#d9dfe8;"></div>
<div style="left:46px;top:1004px;width:3479px;height:2px;background:#c9c9c9;"></div>
<div class="t" style="left:61.0px;top:960.8px;font-family:'Liberation Sans', sans-serif;font-size:27px;line-height:27px;color:#000;font-weight:400;transform:scaleX(1.1287);">Profiler:</div>
<svg style="left:217px;top:955px;" width="42" height="38" viewBox="0 0 42 38"><path d="M26 27 A14 14 0 1 1 29 12" fill="none" stroke="#9a9ea3" stroke-width="3.5"/><path d="M16 8 V17 L11 23" fill="none" stroke="#9a9ea3" stroke-width="3"/><path d="M21 15 L39 25.5 L21 36 Z" fill="#3ea64a"/></svg>
<div class="t" style="left:265.0px;top:960.8px;font-family:'Liberation Sans', sans-serif;font-size:27px;line-height:27px;color:#000;font-weight:400;transform:scaleX(1.1459);">CalculatorTest with &#x27;CPU Profiler&#x27;</div>
<svg style="left:739px;top:965px;" width="18" height="18" viewBox="0 0 18 18"><path d="M1 1 L17 17 M17 1 L1 17" stroke="#a9abad" stroke-width="2.5"/></svg>
<svg style="left:818px;top:957px;" width="38" height="35" viewBox="0 0 38 35"><rect x="9" y="0" width="12" height="6" fill="#5b5b5b"/><rect x="9" y="6" width="14" height="20" fill="#5b5b5b"/><path d="M0 9 H8 M0 14 H8 M0 19 H8" stroke="#5b5b5b" stroke-width="2.5"/><rect x="23" y="4" width="8" height="4" fill="#5b5b5b"/><path d="M19 15 L37 25 L19 35 Z" fill="#3ea64a"/></svg>
<div class="t" style="left:864.6px;top:960.8px;font-family:'Liberation Sans', sans-serif;font-size:27px;line-height:27px;color:#000;font-weight:400;transform:scaleX(1.1617);">CalculatorTest with &#x27;Allocation Profiler&#x27;</div>
<svg style="left:1413px;top:965px;" width="18" height="18" viewBox="0 0 18 18"><path d="M1 1 L17 17 M17 1 L1 17" stroke="#a9abad" stroke-width="2.5"/></svg>
<div style="left:786px;top:1000px;width:674px;height:6px;background:#2a6cd0;"></div>
<svg style="left:3407px;top:954.7px;" width="34" height="34" viewBox="0 0 34 34"><circle cx="17" cy="17" r="11.84" fill="#5c5c5c"/><rect x="12.70" y="1.00" width="8.6" height="32.00" rx="1.5" fill="#5c5c5c" transform="rotate(0 17 17)"/><rect x="12.70" y="1.00" width="8.6" height="32.00" rx="1.5" fill="#5c5c5c" transform="rotate(60 17 17)"/><rect x="12.70" y="1.00" width="8.6" height="32.00" rx="1.5" fill="#5c5c5c" transform="rotate(120 17 17)"/><circle cx="17" cy="17" r="5.44" fill="#d9dfe8"/></svg>
<div style="left:3477px;top:968.7px;width:30px;height:5.0px;background:#5c5c5c;"></div>
<div style="left:46px;top:1006px;width:3479px;height:901px;background:#efefef;"></div>
<div style="left:119px;top:1006px;width:1px;height:901px;background:#c9c9c9;"></div>
<svg style="left:67px;top:1030px;" width="31" height="31" viewBox="0 0 31 31"><path d="M3 12 V28 H19" fill="none" stroke="#5b5b5b" stroke-width="5"/><path d="M10 21 L24 7" stroke="#5b5b5b" stroke-width="5"/><path d="M13 0 H31 V18 Z" fill="#5b5b5b"/></svg>
<div class="t" style="left:153.0px;top:1026.8px;font-family:'Liberation Sans', sans-serif;font-size:27px;line-height:27px;color:#000;font-weight:400;transform:scaleX(1.0567);">Flame Graph</div>
<div class="t" style="left:384.3px;top:1026.8px;font-family:'Liberation Sans', sans-serif;font-size:27px;line-height:27px;color:#000;font-weight:400;transform:scaleX(1.0884);">Call Tree</div>
<div class="t" style="left:566.6px;top:1026.8px;font-family:'Liberation Sans', sans-serif;font-size:27px;line-height:27px;color:#000;font-weight:400;transform:scaleX(1.1141);">Method List</div>
<div style="left:120px;top:1074px;width:3405px;height:2px;background:#d0d0d0;"></div>
<div style="left:120px;top:1070px;width:234px;height:5px;background:#2a6fcf;"></div>
<div style="left:120px;top:1076px;width:680px;height:831px;background:#ffffff;"></div>
<div style="left:120px;top:1078px;width:680px;height:50px;background:#0b5ec0;"></div>
<div class="t" style="left:140.4px;top:1087.7px;font-family:'Liberation Sans', sans-serif;font-size:30.5px;line-height:30.5px;color:#fff;font-weight:700;transform:scaleX(1.0623);">All threads merged</div>
<div class="t" style="left:140.4px;top:1137.7px;font-family:'Liberation Sans', sans-serif;font-size:30.5px;line-height:30.5px;color:#000;font-weight:400;transform:scaleX(1.0838);">Attach Listener</div>
<div class="t" style="left:370.0px;top:1137.7px;font-family:'Liberation Sans', sans-serif;font-size:30.5px;line-height:30.5px;color:#7a7a7a;font-weight:400;transform:scaleX(1.0999);">id=23555</div>
<div class="t" style="left:140.4px;top:1187.7px;font-family:'Liberation Sans', sans-serif;font-size:30.5px;line-height:30.5px;color:#000;font-weight:400;transform:scaleX(1.0911);">Monitor Ctrl-Break</div>
<div class="t" style="left:420.0px;top:1187.7px;font-family:'Liberation Sans', sans-serif;font-size:30.5px;line-height:30.5px;color:#7a7a7a;font-weight:400;transform:scaleX(1.0809);">id=14339</div>
<div class="t" style="left:140.4px;top:1237.7px;font-family:'Liberation Sans', sans-serif;font-size:30.5px;line-height:30.5px;color:#000;font-weight:400;transform:scaleX(1.0584);">Signal Dispatcher</div>
<div class="t" style="left:404.3px;top:1237.7px;font-family:'Liberation Sans', sans-serif;font-size:30.5px;line-height:30.5px;color:#7a7a7a;font-weight:400;transform:scaleX(1.0762);">id=14855</div>
<div class="t" style="left:140.4px;top:1287.7px;font-family:'Liberation Sans', sans-serif;font-size:30.5px;line-height:30.5px;color:#000;font-weight:400;transform:scaleX(1.1097);">Time-limited test</div>
<div class="t" style="left:397.5px;top:1287.7px;font-family:'Liberation Sans', sans-serif;font-size:30.5px;line-height:30.5px;color:#7a7a7a;font-weight:400;transform:scaleX(1.0667);">id=41987</div>
<div class="t" style="left:140.4px;top:1337.7px;font-family:'Liberation Sans', sans-serif;font-size:30.5px;line-height:30.5px;color:#000;font-weight:400;transform:scaleX(1.0104);">main</div>
<div class="t" style="left:218.6px;top:1337.7px;font-family:'Liberation Sans', sans-serif;font-size:30.5px;line-height:30.5px;color:#7a7a7a;font-weight:400;transform:scaleX(1.0877);">id=3075</div>
<div class="t" style="left:140.4px;top:1387.7px;font-family:'Liberation Sans', sans-serif;font-size:30.5px;line-height:30.5px;color:#7a7a7a;font-weight:400;transform:scaleX(1.0762);">id=22787</div>
<div style="left:800px;top:1076px;width:62px;height:831px;background:#f2f2f2;"></div>
<div style="left:800px;top:1076px;width:1px;height:831px;background:#dadada;"></div>
<div style="left:862px;top:1076px;width:2px;height:831px;background:#c9c9c9;"></div>
<svg style="left:814px;top:1092px;" width="36" height="36" viewBox="0 0 36 36"><circle cx="18" cy="18" r="15.5" fill="none" stroke="#555" stroke-width="3.5"/><path d="M18 9 V27 M9 18 H27" stroke="#555" stroke-width="5"/></svg>
<svg style="left:814px;top:1160px;" width="36" height="36" viewBox="0 0 36 36"><circle cx="18" cy="18" r="15.5" fill="none" stroke="#b9b9b9" stroke-width="3.5"/><path d="M9 18 H27" stroke="#b9b9b9" stroke-width="5"/></svg>
<div class="t" style="left:815.0px;top:1232.5px;font-family:'Liberation Sans', sans-serif;font-size:29px;line-height:29px;color:#aaaaaa;font-weight:700;transform:scaleX(0.7395);">1:1</div>
<svg style="left:814px;top:1298px;" width="40" height="34" viewBox="0 0 40 34"><path d="M1 14 C8 2 28 2 35 14 C28 26 8 26 1 14 Z" fill="#555"/><circle cx="18" cy="14" r="7" fill="#f2f2f2"/><circle cx="18" cy="14" r="4" fill="#555"/><path d="M24 26 H38 L31 33 Z" fill="#333"/></svg>
<svg style="left:814px;top:1366px;" width="36" height="36" viewBox="0 0 36 36"><circle cx="14" cy="14" r="10.5" fill="none" stroke="#555" stroke-width="4.5"/><path d="M22 22 L33 33" stroke="#555" stroke-width="5.5" stroke-linecap="round"/></svg>
<div style="left:864px;top:1076px;width:2626px;height:831px;background:#ffffff;"></div>
<div style="left:864px;top:1871px;width:2626px;height:36px;background:#f2f2f2;"></div>
<div style="left:3490px;top:1076px;width:35px;height:831px;background:#f2f2f2;"></div>
<div style="left:3496px;top:1388px;width:24px;height:476px;background:#b5b5b5;border-radius:12px;"></div>
<div style="left:1847.0px;top:1076px;width:330.0px;height:34px;background:#ffd77e;box-shadow:inset 1px 1px 0 #cbaa60;"></div>
<div class="t" style="left:1852.0px;top:1076.4px;font-family:'Liberation Sans', sans-serif;font-size:30px;line-height:30px;color:#2f2b22;font-weight:400;transform:scaleX(1.07);">declaredAnnotations</div>
<div style="left:1847.0px;top:1110px;width:330.0px;height:38px;background:#ffd77e;box-shadow:inset 1px 1px 0 #cbaa60;"></div>
<div class="t" style="left:1852.0px;top:1114.4px;font-family:'Liberation Sans', sans-serif;font-size:30px;line-height:30px;color:#2f2b22;font-weight:400;transform:scaleX(1.07);">...</div>
<div style="left:1847.0px;top:1148px;width:330.0px;height:38px;background:#ffd77e;box-shadow:inset 1px 1px 0 #cbaa60;"></div>
<div class="t" style="left:1852.0px;top:1152.4px;font-family:'Liberation Sans', sans-serif;font-size:30px;line-height:30px;color:#2f2b22;font-weight:400;transform:scaleX(1.07);">...</div>
<div style="left:1847.0px;top:1186px;width:330.0px;height:38px;background:#ffd77e;box-shadow:inset 1px 1px 0 #cbaa60;"></div>
<div class="t" style="left:1852.0px;top:1190.4px;font-family:'Liberation Sans', sans-serif;font-size:30px;line-height:30px;color:#2f2b22;font-weight:400;transform:scaleX(1.07);">getAnnotations</div>
<div style="left:1847.0px;top:1224px;width:330.0px;height:38px;background:#ffd77e;box-shadow:inset 1px 1px 0 #cbaa60;"></div>
<div class="t" style="left:1852.0px;top:1228.4px;font-family:'Liberation Sans', sans-serif;font-size:30px;line-height:30px;color:#2f2b22;font-weight:400;transform:scaleX(1.07);">getAnnotations</div>
<div style="left:1847.0px;top:1262px;width:330.0px;height:38px;background:#ffd77e;box-shadow:inset 1px 1px 0 #cbaa60;"></div>
<div class="t" style="left:1852.0px;top:1266.4px;font-family:'Liberation Sans', sans-serif;font-size:30px;line-height:30px;color:#2f2b22;font-weight:400;transform:scaleX(1.07);">...</div>
<div style="left:1847.0px;top:1300px;width:330.0px;height:38px;background:#ffd77e;box-shadow:inset 1px 1px 0 #cbaa60;"></div>
<div class="t" style="left:1852.0px;top:1304.4px;font-family:'Liberation Sans', sans-serif;font-size:30px;line-height:30px;color:#2f2b22;font-weight:400;transform:scaleX(1.07);">...</div>
<div style="left:1847.0px;top:1338px;width:330.0px;height:38px;background:#ffd77e;box-shadow:inset 1px 1px 0 #cbaa60;"></div>
<div class="t" style="left:1852.0px;top:1342.4px;font-family:'Liberation Sans', sans-serif;font-size:30px;line-height:30px;color:#2f2b22;font-weight:400;transform:scaleX(1.07);">TestClass.&lt;init&gt;</div>
<div style="left:1847.0px;top:1376px;width:330.0px;height:38px;background:#ffd77e;box-shadow:inset 1px 1px 0 #cbaa60;"></div>
<div class="t" style="left:1852.0px;top:1380.4px;font-family:'Liberation Sans', sans-serif;font-size:30px;line-height:30px;color:#2f2b22;font-weight:400;transform:scaleX(1.07);">createTestClass</div>
<div style="left:1847.0px;top:1414px;width:330.0px;height:38px;background:#ffd77e;box-shadow:inset 1px 1px 0 #cbaa60;"></div>
<div class="t" style="left:1852.0px;top:1418.4px;font-family:'Liberation Sans', sans-serif;font-size:30px;line-height:30px;color:#2f2b22;font-weight:400;transform:scaleX(1.07);">ParentRunner.&lt;init&gt;</div>
<div style="left:1847.0px;top:1452px;width:330.0px;height:38px;background:#ffd77e;box-shadow:inset 1px 1px 0 #cbaa60;"></div>
<div class="t" style="left:1852.0px;top:1456.4px;font-family:'Liberation Sans', sans-serif;font-size:30px;line-height:30px;color:#2f2b22;font-weight:400;transform:scaleX(1.07);">&lt;init&gt;</div>
<div style="left:1847.0px;top:1490px;width:330.0px;height:38px;background:#ffd77e;box-shadow:inset 1px 1px 0 #cbaa60;"></div>
<div class="t" style="left:1852.0px;top:1494.4px;font-family:'Liberation Sans', sans-serif;font-size:30px;line-height:30px;color:#2f2b22;font-weight:400;transform:scaleX(1.07);">runnerForClass</div>
<div style="left:1847.0px;top:1528px;width:330.0px;height:38px;background:#ffd77e;box-shadow:inset 1px 1px 0 #cbaa60;"></div>
<div class="t" style="left:1852.0px;top:1532.4px;font-family:'Liberation Sans', sans-serif;font-size:30px;line-height:30px;color:#2f2b22;font-weight:400;transform:scaleX(1.07);">safeRunnerForClass</div>
<div style="left:1847.0px;top:1566px;width:330.0px;height:38px;background:#ffd77e;box-shadow:inset 1px 1px 0 #cbaa60;"></div>
<div class="t" style="left:1852.0px;top:1570.4px;font-family:'Liberation Sans', sans-serif;font-size:30px;line-height:30px;color:#2f2b22;font-weight:400;transform:scaleX(1.07);">runnerForClass</div>
<div style="left:1847.0px;top:1604px;width:330.0px;height:38px;background:#ffd77e;box-shadow:inset 1px 1px 0 #cbaa60;"></div>
<div class="t" style="left:1852.0px;top:1608.4px;font-family:'Liberation Sans', sans-serif;font-size:30px;line-height:30px;color:#2f2b22;font-weight:400;transform:scaleX(1.07);">safeRunnerForClass</div>
<div style="left:1847.0px;top:1642px;width:330.0px;height:38px;background:#ffd77e;box-shadow:inset 1px 1px 0 #cbaa60;"></div>
<div class="t" style="left:1852.0px;top:1646.4px;font-family:'Liberation Sans', sans-serif;font-size:30px;line-height:30px;color:#2f2b22;font-weight:400;transform:scaleX(1.07);">getRunner</div>
<div style="left:2177.0px;top:1076px;width:328.0px;height:34px;background:#ffd77e;box-shadow:inset 1px 1px 0 #cbaa60;"></div>
<div class="t" style="left:2182.0px;top:1076.4px;font-family:'Liberation Sans', sans-serif;font-size:30px;line-height:30px;color:#2f2b22;font-weight:400;transform:scaleX(1.07);">getLanguageTagSet</div>
<div style="left:2177.0px;top:1110px;width:328.0px;height:38px;background:#ffd77e;box-shadow:inset 1px 1px 0 #cbaa60;"></div>
<div class="t" style="left:2182.0px;top:1114.4px;font-family:'Liberation Sans', sans-serif;font-size:30px;line-height:30px;color:#2f2b22;font-weight:400;transform:scaleX(1.07);">...</div>
<div style="left:2177.0px;top:1148px;width:328.0px;height:38px;background:#ffd77e;box-shadow:inset 1px 1px 0 #cbaa60;"></div>
<div class="t" style="left:2182.0px;top:1152.4px;font-family:'Liberation Sans', sans-serif;font-size:30px;line-height:30px;color:#2f2b22;font-weight:400;transform:scaleX(1.07);">...</div>
<div style="left:2177.0px;top:1186px;width:328.0px;height:38px;background:#ffd77e;box-shadow:inset 1px 1px 0 #cbaa60;"></div>
<div class="t" style="left:2182.0px;top:1190.4px;font-family:'Liberation Sans', sans-serif;font-size:30px;line-height:30px;color:#2f2b22;font-weight:400;transform:scaleX(1.07);">findAdapter</div>
<div style="left:2177.0px;top:1224px;width:328.0px;height:38px;background:#ffd77e;box-shadow:inset 1px 1px 0 #cbaa60;"></div>
<div class="t" style="left:2182.0px;top:1228.4px;font-family:'Liberation Sans', sans-serif;font-size:30px;line-height:30px;color:#2f2b22;font-weight:400;transform:scaleX(1.07);">getAdapter</div>
<div style="left:2177.0px;top:1262px;width:328.0px;height:38px;background:#ffd77e;box-shadow:inset 1px 1px 0 #cbaa60;"></div>
<div class="t" style="left:2182.0px;top:1266.4px;font-family:'Liberation Sans', sans-serif;font-size:30px;line-height:30px;color:#2f2b22;font-weight:400;transform:scaleX(1.07);">getInstance</div>
<div style="left:2177.0px;top:1300px;width:328.0px;height:38px;background:#ffd77e;box-shadow:inset 1px 1px 0 #cbaa60;"></div>
<div class="t" style="left:2182.0px;top:1304.4px;font-family:'Liberation Sans', sans-serif;font-size:30px;line-height:30px;color:#2f2b22;font-weight:400;transform:scaleX(1.07);">j.u.Formatter.getZero</div>
<div style="left:2177.0px;top:1338px;width:328.0px;height:38px;background:#ffd77e;box-shadow:inset 1px 1px 0 #cbaa60;"></div>
<div class="t" style="left:2182.0px;top:1342.4px;font-family:'Liberation Sans', sans-serif;font-size:30px;line-height:30px;color:#2f2b22;font-weight:400;transform:scaleX(1.07);">j.u.Formatter.&lt;init&gt;</div>
<div style="left:2177.0px;top:1376px;width:328.0px;height:38px;background:#ffd77e;box-shadow:inset 1px 1px 0 #cbaa60;"></div>
<div class="t" style="left:2182.0px;top:1380.4px;font-family:'Liberation Sans', sans-serif;font-size:30px;line-height:30px;color:#2f2b22;font-weight:400;transform:scaleX(1.07);">j.u.Formatter.&lt;init&gt;</div>
<div style="left:2177.0px;top:1414px;width:328.0px;height:38px;background:#ffd77e;box-shadow:inset 1px 1px 0 #cbaa60;"></div>
<div class="t" style="left:2182.0px;top:1418.4px;font-family:'Liberation Sans', sans-serif;font-size:30px;line-height:30px;color:#2f2b22;font-weight:400;transform:scaleX(1.07);">j.l.String.format</div>
<div style="left:2177.0px;top:1452px;width:328.0px;height:38px;background:#ffd77e;box-shadow:inset 1px 1px 0 #cbaa60;"></div>
<div class="t" style="left:2182.0px;top:1456.4px;font-family:'Liberation Sans', sans-serif;font-size:30px;line-height:30px;color:#2f2b22;font-weight:400;transform:scaleX(1.07);">formatDisplayName</div>
<div style="left:2177.0px;top:1490px;width:328.0px;height:38px;background:#ffd77e;box-shadow:inset 1px 1px 0 #cbaa60;"></div>
<div class="t" style="left:2182.0px;top:1494.4px;font-family:'Liberation Sans', sans-serif;font-size:30px;line-height:30px;color:#2f2b22;font-weight:400;transform:scaleX(1.07);">...</div>
<div style="left:2177.0px;top:1528px;width:328.0px;height:38px;background:#ffd77e;box-shadow:inset 1px 1px 0 #cbaa60;"></div>
<div class="t" style="left:2182.0px;top:1532.4px;font-family:'Liberation Sans', sans-serif;font-size:30px;line-height:30px;color:#2f2b22;font-weight:400;transform:scaleX(1.07);">describeChild</div>
<div style="left:2177.0px;top:1566px;width:328.0px;height:38px;background:#ffd77e;box-shadow:inset 1px 1px 0 #cbaa60;"></div>
<div class="t" style="left:2182.0px;top:1570.4px;font-family:'Liberation Sans', sans-serif;font-size:30px;line-height:30px;color:#2f2b22;font-weight:400;transform:scaleX(1.07);">describeChild</div>
<div style="left:2177.0px;top:1604px;width:328.0px;height:38px;background:#ffd77e;box-shadow:inset 1px 1px 0 #cbaa60;"></div>
<div class="t" style="left:2182.0px;top:1608.4px;font-family:'Liberation Sans', sans-serif;font-size:30px;line-height:30px;color:#2f2b22;font-weight:400;transform:scaleX(1.07);">getDescription</div>
<div style="left:2177.0px;top:1642px;width:328.0px;height:38px;background:#ffd77e;box-shadow:inset 1px 1px 0 #cbaa60;"></div>
<div class="t" style="left:2182.0px;top:1646.4px;font-family:'Liberation Sans', sans-serif;font-size:30px;line-height:30px;color:#2f2b22;font-weight:400;transform:scaleX(1.07);">getDescription</div>
<div style="left:2505.0px;top:1076px;width:328.0px;height:34px;background:#ffd77e;box-shadow:inset 1px 1px 0 #cbaa60;"></div>
<div class="t" style="left:2510.0px;top:1076.4px;font-family:'Liberation Sans', sans-serif;font-size:30px;line-height:30px;color:#2f2b22;font-weight:400;transform:scaleX(1.07);">ensureOpen</div>
<div style="left:2505.0px;top:1110px;width:328.0px;height:38px;background:#ffd77e;box-shadow:inset 1px 1px 0 #cbaa60;"></div>
<div class="t" style="left:2510.0px;top:1114.4px;font-family:'Liberation Sans', sans-serif;font-size:30px;line-height:30px;color:#2f2b22;font-weight:400;transform:scaleX(1.07);">&lt;init&gt;</div>
<div style="left:2505.0px;top:1148px;width:328.0px;height:38px;background:#ffd77e;box-shadow:inset 1px 1px 0 #cbaa60;"></div>
<div class="t" style="left:2510.0px;top:1152.4px;font-family:'Liberation Sans', sans-serif;font-size:30px;line-height:30px;color:#2f2b22;font-weight:400;transform:scaleX(1.07);">URLClassPath$3.run</div>
<div style="left:2505.0px;top:1186px;width:328.0px;height:38px;background:#ffd77e;box-shadow:inset 1px 1px 0 #cbaa60;"></div>
<div class="t" style="left:2510.0px;top:1190.4px;font-family:'Liberation Sans', sans-serif;font-size:30px;line-height:30px;color:#2f2b22;font-weight:400;transform:scaleX(1.07);">URLClassPath$3.run</div>
<div style="left:2505.0px;top:1224px;width:328.0px;height:38px;background:#ffd77e;box-shadow:inset 1px 1px 0 #cbaa60;"></div>
<div class="t" style="left:2510.0px;top:1228.4px;font-family:'Liberation Sans', sans-serif;font-size:30px;line-height:30px;color:#2f2b22;font-weight:400;transform:scaleX(1.07);">doPrivileged</div>
<div style="left:2505.0px;top:1262px;width:328.0px;height:38px;background:#ffd77e;box-shadow:inset 1px 1px 0 #cbaa60;"></div>
<div class="t" style="left:2510.0px;top:1266.4px;font-family:'Liberation Sans', sans-serif;font-size:30px;line-height:30px;color:#2f2b22;font-weight:400;transform:scaleX(1.07);">getLoader</div>
<div style="left:2505.0px;top:1300px;width:328.0px;height:38px;background:#ffd77e;box-shadow:inset 1px 1px 0 #cbaa60;"></div>
<div class="t" style="left:2510.0px;top:1304.4px;font-family:'Liberation Sans', sans-serif;font-size:30px;line-height:30px;color:#2f2b22;font-weight:400;transform:scaleX(1.07);">getLoader</div>
<div style="left:2505.0px;top:1338px;width:328.0px;height:38px;background:#ffd77e;box-shadow:inset 1px 1px 0 #cbaa60;"></div>
<div class="t" style="left:2510.0px;top:1342.4px;font-family:'Liberation Sans', sans-serif;font-size:30px;line-height:30px;color:#2f2b22;font-weight:400;transform:scaleX(1.07);">getNextLoader</div>
<div style="left:2505.0px;top:1376px;width:328.0px;height:38px;background:#ffd77e;box-shadow:inset 1px 1px 0 #cbaa60;"></div>
<div class="t" style="left:2510.0px;top:1380.4px;font-family:'Liberation Sans', sans-serif;font-size:30px;line-height:30px;color:#2f2b22;font-weight:400;transform:scaleX(1.07);">getResource</div>
<div style="left:2505.0px;top:1414px;width:328.0px;height:38px;background:#ffd77e;box-shadow:inset 1px 1px 0 #cbaa60;"></div>
<div class="t" style="left:2510.0px;top:1418.4px;font-family:'Liberation Sans', sans-serif;font-size:30px;line-height:30px;color:#2f2b22;font-weight:400;transform:scaleX(1.07);">run</div>
<div style="left:2505.0px;top:1452px;width:328.0px;height:38px;background:#ffd77e;box-shadow:inset 1px 1px 0 #cbaa60;"></div>
<div class="t" style="left:2510.0px;top:1456.4px;font-family:'Liberation Sans', sans-serif;font-size:30px;line-height:30px;color:#2f2b22;font-weight:400;transform:scaleX(1.07);">run</div>
<div style="left:2505.0px;top:1490px;width:328.0px;height:38px;background:#ffd77e;box-shadow:inset 1px 1px 0 #cbaa60;"></div>
<div class="t" style="left:2510.0px;top:1494.4px;font-family:'Liberation Sans', sans-serif;font-size:30px;line-height:30px;color:#2f2b22;font-weight:400;transform:scaleX(1.07);">doPrivileged</div>
<div style="left:2505.0px;top:1528px;width:328.0px;height:38px;background:#ffd77e;box-shadow:inset 1px 1px 0 #cbaa60;"></div>
<div class="t" style="left:2510.0px;top:1532.4px;font-family:'Liberation Sans', sans-serif;font-size:30px;line-height:30px;color:#2f2b22;font-weight:400;transform:scaleX(1.07);">findClass</div>
<div style="left:2505.0px;top:1566px;width:328.0px;height:38px;background:#ffd77e;box-shadow:inset 1px 1px 0 #cbaa60;"></div>
<div class="t" style="left:2510.0px;top:1570.4px;font-family:'Liberation Sans', sans-serif;font-size:30px;line-height:30px;color:#2f2b22;font-weight:400;transform:scaleX(1.07);">loadClass</div>
<div style="left:2505.0px;top:1604px;width:328.0px;height:38px;background:#ffd77e;box-shadow:inset 1px 1px 0 #cbaa60;"></div>
<div class="t" style="left:2510.0px;top:1608.4px;font-family:'Liberation Sans', sans-serif;font-size:30px;line-height:30px;color:#2f2b22;font-weight:400;transform:scaleX(1.07);">loadClass</div>
<div style="left:2505.0px;top:1642px;width:328.0px;height:38px;background:#ffd77e;box-shadow:inset 1px 1px 0 #cbaa60;"></div>
<div class="t" style="left:2510.0px;top:1646.4px;font-family:'Liberation Sans', sans-serif;font-size:30px;line-height:30px;color:#2f2b22;font-weight:400;transform:scaleX(1.07);">loadClass</div>
<div style="left:2505.0px;top:1680px;width:328.0px;height:38px;background:#ffd77e;box-shadow:inset 1px 1px 0 #cbaa60;"></div>
<div class="t" style="left:2510.0px;top:1684.4px;font-family:'Liberation Sans', sans-serif;font-size:30px;line-height:30px;color:#2f2b22;font-weight:400;transform:scaleX(1.07);">j.l.Class.forName0</div>
<div style="left:2505.0px;top:1718px;width:328.0px;height:38px;background:#ffd77e;box-shadow:inset 1px 1px 0 #cbaa60;"></div>
<div class="t" style="left:2510.0px;top:1722.4px;font-family:'Liberation Sans', sans-serif;font-size:30px;line-height:30px;color:#2f2b22;font-weight:400;transform:scaleX(1.07);">j.l.Class.forName</div>
<div style="left:1847.0px;top:1680px;width:658.0px;height:38px;background:#ffd77e;box-shadow:inset 1px 1px 0 #cbaa60;"></div>
<div class="t" style="left:1852.0px;top:1684.4px;font-family:'Liberation Sans', sans-serif;font-size:30px;line-height:30px;color:#2f2b22;font-weight:400;transform:scaleX(1.07);">JUnit4IdeaTestRunner.startRunnerWithArgs</div>
<div style="left:1847.0px;top:1718px;width:658.0px;height:38px;background:#ffd77e;box-shadow:inset 1px 1px 0 #cbaa60;"></div>
<div class="t" style="left:1852.0px;top:1722.4px;font-family:'Liberation Sans', sans-serif;font-size:30px;line-height:30px;color:#2f2b22;font-weight:400;transform:scaleX(1.07);">startRunnerWithArgs</div>
<div style="left:3161.0px;top:1604px;width:329.0px;height:38px;background:#ffd77e;box-shadow:inset 1px 1px 0 #cbaa60;"></div>
<div class="t" style="left:3166.0px;top:1608.4px;font-family:'Liberation Sans', sans-serif;font-size:30px;line-height:30px;color:#2f2b22;font-weight:400;transform:scaleX(1.07);">java.lang.Object[]</div>
<div style="left:3161.0px;top:1642px;width:329.0px;height:38px;background:#ffd77e;box-shadow:inset 1px 1px 0 #cbaa60;"></div>
<div class="t" style="left:3166.0px;top:1646.4px;font-family:'Liberation Sans', sans-serif;font-size:30px;line-height:30px;color:#2f2b22;font-weight:400;transform:scaleX(1.07);">evaluate</div>
<div style="left:3161.0px;top:1680px;width:329.0px;height:38px;background:#ffd77e;box-shadow:inset 1px 1px 0 #cbaa60;"></div>
<div class="t" style="left:3166.0px;top:1684.4px;font-family:'Liberation Sans', sans-serif;font-size:30px;line-height:30px;color:#2f2b22;font-weight:400;transform:scaleX(1.07);">call</div>
<div style="left:3161.0px;top:1718px;width:329.0px;height:38px;background:#ffd77e;box-shadow:inset 1px 1px 0 #cbaa60;"></div>
<div class="t" style="left:3166.0px;top:1722.4px;font-family:'Liberation Sans', sans-serif;font-size:30px;line-height:30px;color:#2f2b22;font-weight:400;transform:scaleX(1.07);">call</div>
<div style="left:863.0px;top:1756px;width:656.0px;height:38px;background:#ffd77e;box-shadow:inset 1px 1px 0 #cbaa60;"></div>
<div class="t" style="left:868.0px;top:1760.4px;font-family:'Liberation Sans', sans-serif;font-size:30px;line-height:30px;color:#2f2b22;font-weight:400;transform:scaleX(1.07);">java.lang.String</div>
<div style="left:1519.0px;top:1756px;width:328.0px;height:38px;background:#ffd77e;box-shadow:inset 1px 1px 0 #cbaa60;"></div>
<div class="t" style="left:1524.0px;top:1760.4px;font-family:'Liberation Sans', sans-serif;font-size:30px;line-height:30px;color:#2f2b22;font-weight:400;transform:scaleX(1.07);">java.lang.Thread</div>
<div style="left:1847.0px;top:1756px;width:658.0px;height:38px;background:#ffd77e;box-shadow:inset 1px 1px 0 #cbaa60;"></div>
<div class="t" style="left:1852.0px;top:1760.4px;font-family:'Liberation Sans', sans-serif;font-size:30px;line-height:30px;color:#2f2b22;font-weight:400;transform:scaleX(1.07);">c.i.r.j.JUnitStarter.prepareStreamsAndStart</div>
<div style="left:2505.0px;top:1756px;width:328.0px;height:38px;background:#ffd77e;box-shadow:inset 1px 1px 0 #cbaa60;"></div>
<div class="t" style="left:2510.0px;top:1760.4px;font-family:'Liberation Sans', sans-serif;font-size:30px;line-height:30px;color:#2f2b22;font-weight:400;transform:scaleX(1.07);">processParameters</div>
<div style="left:2833.0px;top:1756px;width:328.0px;height:38px;background:#ffd77e;box-shadow:inset 1px 1px 0 #cbaa60;"></div>
<div class="t" style="left:2838.0px;top:1760.4px;font-family:'Liberation Sans', sans-serif;font-size:30px;line-height:30px;color:#2f2b22;font-weight:400;transform:scaleX(1.07);">java.lang.String</div>
<div style="left:3161.0px;top:1756px;width:329.0px;height:38px;background:#ffd77e;box-shadow:inset 1px 1px 0 #cbaa60;"></div>
<div class="t" style="left:3166.0px;top:1760.4px;font-family:'Liberation Sans', sans-serif;font-size:30px;line-height:30px;color:#2f2b22;font-weight:400;transform:scaleX(1.07);">j.u.c.FutureTask.run</div>
<div style="left:863.0px;top:1794px;width:984.0px;height:38px;background:#8ecff2;box-shadow:inset 1px 1px 0 #7fb9dc;"></div>
<div class="t" style="left:868.0px;top:1798.4px;font-family:'Liberation Sans', sans-serif;font-size:30px;line-height:30px;color:#2f2b22;font-weight:400;transform:scaleX(1.07);">[not_walkable]</div>
<div style="left:1847.0px;top:1794px;width:986.0px;height:38px;background:#ffd77e;box-shadow:inset 1px 1px 0 #cbaa60;"></div>
<div class="t" style="left:1852.0px;top:1798.4px;font-family:'Liberation Sans', sans-serif;font-size:30px;line-height:30px;color:#2f2b22;font-weight:400;transform:scaleX(1.07);">com.intellij.rt.junit.JUnitStarter.main</div>
<div style="left:2833.0px;top:1794px;width:328.0px;height:38px;background:#ffd77e;box-shadow:inset 1px 1px 0 #cbaa60;"></div>
<div class="t" style="left:2838.0px;top:1798.4px;font-family:'Liberation Sans', sans-serif;font-size:30px;line-height:30px;color:#2f2b22;font-weight:400;transform:scaleX(1.07);">AppMainV2$1.run</div>
<div style="left:3161.0px;top:1794px;width:329.0px;height:38px;background:#ffd77e;box-shadow:inset 1px 1px 0 #cbaa60;"></div>
<div class="t" style="left:3166.0px;top:1798.4px;font-family:'Liberation Sans', sans-serif;font-size:30px;line-height:30px;color:#2f2b22;font-weight:400;transform:scaleX(1.07);">java.lang.Thread.run</div>
<div style="left:863.0px;top:1832px;width:2627.0px;height:38px;background:#d3d3d3;box-shadow:inset 1px 1px 0 #c0c0c0;"></div>
<div class="t" style="left:868.0px;top:1836.4px;font-family:'Liberation Sans', sans-serif;font-size:30px;line-height:30px;color:#2f2b22;font-weight:400;transform:scaleX(1.07);">all</div>
<div style="left:863.5px;top:1870px;width:2626.0px;height:1px;background:#a5a5a5;"></div>
<div style="left:3489.5px;top:1604px;width:1.0px;height:267px;background:#cbaa60;"></div>
<div style="left:2833px;top:1076px;width:1px;height:680px;background:#cbaa60;"></div>
<div style="left:0px;top:1906px;width:3578px;height:2px;background:#c9c9c9;"></div>
<div style="left:0px;top:1908px;width:3578px;height:57px;background:#ececec;"></div>
<svg style="left:81px;top:1924px;" width="25" height="21" viewBox="0 0 25 21"><rect x="0" y="1" width="4" height="4" fill="#666"/><rect x="0" y="8" width="4" height="4" fill="#666"/><rect x="0" y="15" width="4" height="4" fill="#666"/><rect x="7" y="1" width="18" height="4" fill="#666"/><rect x="7" y="8" width="18" height="4" fill="#666"/><rect x="7" y="15" width="18" height="4" fill="#666"/></svg>
<div class="t" style="left:116.5px;top:1925.4px;font-family:'Liberation Sans', sans-serif;font-size:27px;line-height:27px;color:#000;font-weight:400;transform:scaleX(1.0603);"><u>6</u>: TODO</div>
<svg style="left:287px;top:1924px;" width="20" height="24" viewBox="0 0 20 24"><path d="M0 0 L20 12 L0 24 Z" fill="#5f5f5f"/></svg>
<div class="t" style="left:322.0px;top:1925.4px;font-family:'Liberation Sans', sans-serif;font-size:27px;line-height:27px;color:#000;font-weight:400;transform:scaleX(1.0520);"><u>4</u>: Run</div>
<svg style="left:468px;top:1914px;" width="44" height="44" viewBox="0 0 44 44"><path d="M18 0 H34 L22 16 H30 L2 44 L12 21 H4 Z" fill="#f6a00b"/><path d="M22 20 L42 31 L22 42 Z" fill="#3aa14a"/></svg>
<div class="t" style="left:520.7px;top:1925.4px;font-family:'Liberation Sans', sans-serif;font-size:27px;line-height:27px;color:#000;font-weight:400;transform:scaleX(1.0748);">Run with Parallel Runner</div>
<div style="left:878px;top:1908px;width:186px;height:56px;background:#acafb2;"></div>
<svg style="left:900px;top:1919px;" width="34" height="34" viewBox="0 0 34 34"><path d="M19 24 A11 11 0 1 1 24 12" fill="none" stroke="#555" stroke-width="3"/><path d="M13 7 V15 L9 20" fill="none" stroke="#555" stroke-width="2.5"/><path d="M17 13 L33 23 L17 33 Z" fill="#555"/></svg>
<div class="t" style="left:942.6px;top:1925.4px;font-family:'Liberation Sans', sans-serif;font-size:27px;line-height:27px;color:#000;font-weight:400;transform:scaleX(1.1107);">Profiler</div>
<svg style="left:1095px;top:1923px;" width="32" height="25" viewBox="0 0 36 32"><rect x="13" y="1.5" width="10" height="29" fill="#e2bf74" stroke="#3a3a3a" stroke-width="2.5"/><path d="M0 9 H10" stroke="#3a3a3a" stroke-width="2.5"/><path d="M8 4.5 L13 9 L8 13.5 Z" fill="#3a3a3a"/><path d="M23 21 H32" stroke="#3a3a3a" stroke-width="2.5"/><path d="M30 16.5 L35.5 21 L30 25.5 Z" fill="#3a3a3a"/></svg>
<div class="t" style="left:1136.6px;top:1925.4px;font-family:'Liberation Sans', sans-serif;font-size:27px;line-height:27px;color:#000;font-weight:400;transform:scaleX(1.0747);">Sequence Diagram</div>
<svg style="left:1443px;top:1920px;" width="33" height="33" viewBox="0 0 33 33"><circle cx="16.5" cy="16.5" r="14" fill="none" stroke="#d9312b" stroke-width="4"/><path d="M3 16.5 H30" stroke="#d9312b" stroke-width="3"/><path d="M6 19 Q10 13 14 19 Q18 25 22 19 Q25 14 28 18" fill="none" stroke="#d9312b" stroke-width="2"/></svg>
<div class="t" style="left:1484.0px;top:1925.4px;font-family:'Liberation Sans', sans-serif;font-size:27px;line-height:27px;color:#000;font-weight:400;transform:scaleX(1.0900);">SonarLint</div>
<svg style="left:1663px;top:1922px;" width="28" height="26" viewBox="0 0 28 26"><rect x="0" y="0" width="28" height="26" fill="#666"/><path d="M5 7 L11 12 L5 17" fill="none" stroke="#fff" stroke-width="2.5"/><path d="M12 19 H20" stroke="#fff" stroke-width="2.5"/></svg>
<div class="t" style="left:1701.6px;top:1925.4px;font-family:'Liberation Sans', sans-serif;font-size:27px;line-height:27px;color:#000;font-weight:400;transform:scaleX(1.1212);">Terminal</div>
<svg style="left:3102px;top:1921px;" width="32" height="32" viewBox="0 0 32 32"><path d="M16 0 A16 16 0 0 0 0 16 A16 16 0 0 0 16 32 H32 V16 A16 16 0 0 0 16 0 Z" fill="#3aa14a"/><text x="15" y="25" font-family="Liberation Sans" font-weight="700" font-size="24" text-anchor="middle" fill="#fff">3</text></svg>
<div class="t" style="left:3142.0px;top:1925.4px;font-family:'Liberation Sans', sans-serif;font-size:27px;line-height:27px;color:#000;font-weight:400;transform:scaleX(1.0741);">Event Log</div>
<svg style="left:3327px;top:1916px;" width="40" height="38" viewBox="0 0 40 38"><rect x="1" y="1" width="38" height="36" fill="#f4f4f4" stroke="#8b8b8b" stroke-width="2"/><rect x="4" y="4" width="32" height="5" fill="#9fb6cc"/><path d="M5 15 H35 M5 22 H35 M5 29 H35" stroke="#f0b429" stroke-width="2.5"/><path d="M14 13 H22 M24 20 H30" stroke="#3aa14a" stroke-width="2.5"/></svg>
<div class="t" style="left:3374.0px;top:1925.4px;font-family:'Liberation Sans', sans-serif;font-size:27px;line-height:27px;color:#000;font-weight:400;transform:scaleX(1.0567);">VisualGC</div>
<div style="left:0px;top:1964px;width:3578px;height:2px;background:#cdcdcd;"></div>
<div style="left:0px;top:1966px;width:3578px;height:50px;background:#e9e9e9;background:linear-gradient(#ededed,#d5d5d5);"></div>
<svg style="left:9px;top:1977px;" width="31" height="30" viewBox="0 0 31 30"><rect x="8" y="1.5" width="21.5" height="20" fill="none" stroke="#666" stroke-width="3"/><path d="M3 7 V27.5 H23" fill="none" stroke="#666" stroke-width="3"/></svg>
<div class="t" style="left:71.0px;top:1978.0px;font-family:'Liberation Sans', sans-serif;font-size:28px;line-height:28px;color:#000;font-weight:400;transform:scaleX(1.0670);">Profiler data is ready. Open (moments ago)</div>
<div class="t" style="left:3037.0px;top:1978.0px;font-family:'Liberation Sans', sans-serif;font-size:28px;line-height:28px;color:#000;font-weight:400;transform:scaleX(1.0734);">22:6</div>
<div class="t" style="left:3128.0px;top:1978.0px;font-family:'Liberation Sans', sans-serif;font-size:28px;line-height:28px;color:#000;font-weight:400;transform:scaleX(0.9484);">LF</div>
<div class="t" style="left:3193.0px;top:1978.0px;font-family:'Liberation Sans', sans-serif;font-size:28px;line-height:28px;color:#000;font-weight:400;transform:scaleX(1.0526);">UTF-8</div>
<div class="t" style="left:3310.5px;top:1978.0px;font-family:'Liberation Sans', sans-serif;font-size:28px;line-height:28px;color:#000;font-weight:400;transform:scaleX(1.0439);">4 spaces</div>
<svg style="left:3457px;top:1976px;" width="30" height="32" viewBox="0 0 30 32"><path d="M4 12 V8 A7 7 0 0 1 18 8" fill="none" stroke="#666" stroke-width="3.5"/><rect x="8" y="14" width="21" height="17" fill="#666"/></svg>
<svg style="left:3520px;top:1974px;" width="31" height="33" viewBox="0 0 31 33"><path d="M6 11 V6 Q6 0.5 15.5 0.5 Q25 0.5 25 6 V11 Z" fill="#5c5c5c"/><rect x="0" y="10" width="31" height="3.5" fill="#5c5c5c"/><circle cx="15.5" cy="19.5" r="6.8" fill="none" stroke="#5c5c5c" stroke-width="2.2"/><circle cx="12.8" cy="18.5" r="1.2" fill="#5c5c5c"/><circle cx="18.2" cy="18.5" r="1.2" fill="#5c5c5c"/><path d="M12 21.5 Q15.5 24.5 19 21.5" fill="none" stroke="#5c5c5c" stroke-width="1.5"/><path d="M2 33 L7 26.5 H24 L29 33 Z" fill="#5c5c5c"/></svg>
<div style="left:1115px;top:935px;width:312px;height:79px;background:transparent;border:7px solid #d2111a;border-radius:4px;box-sizing:border-box;"></div>
</div></body></html>
